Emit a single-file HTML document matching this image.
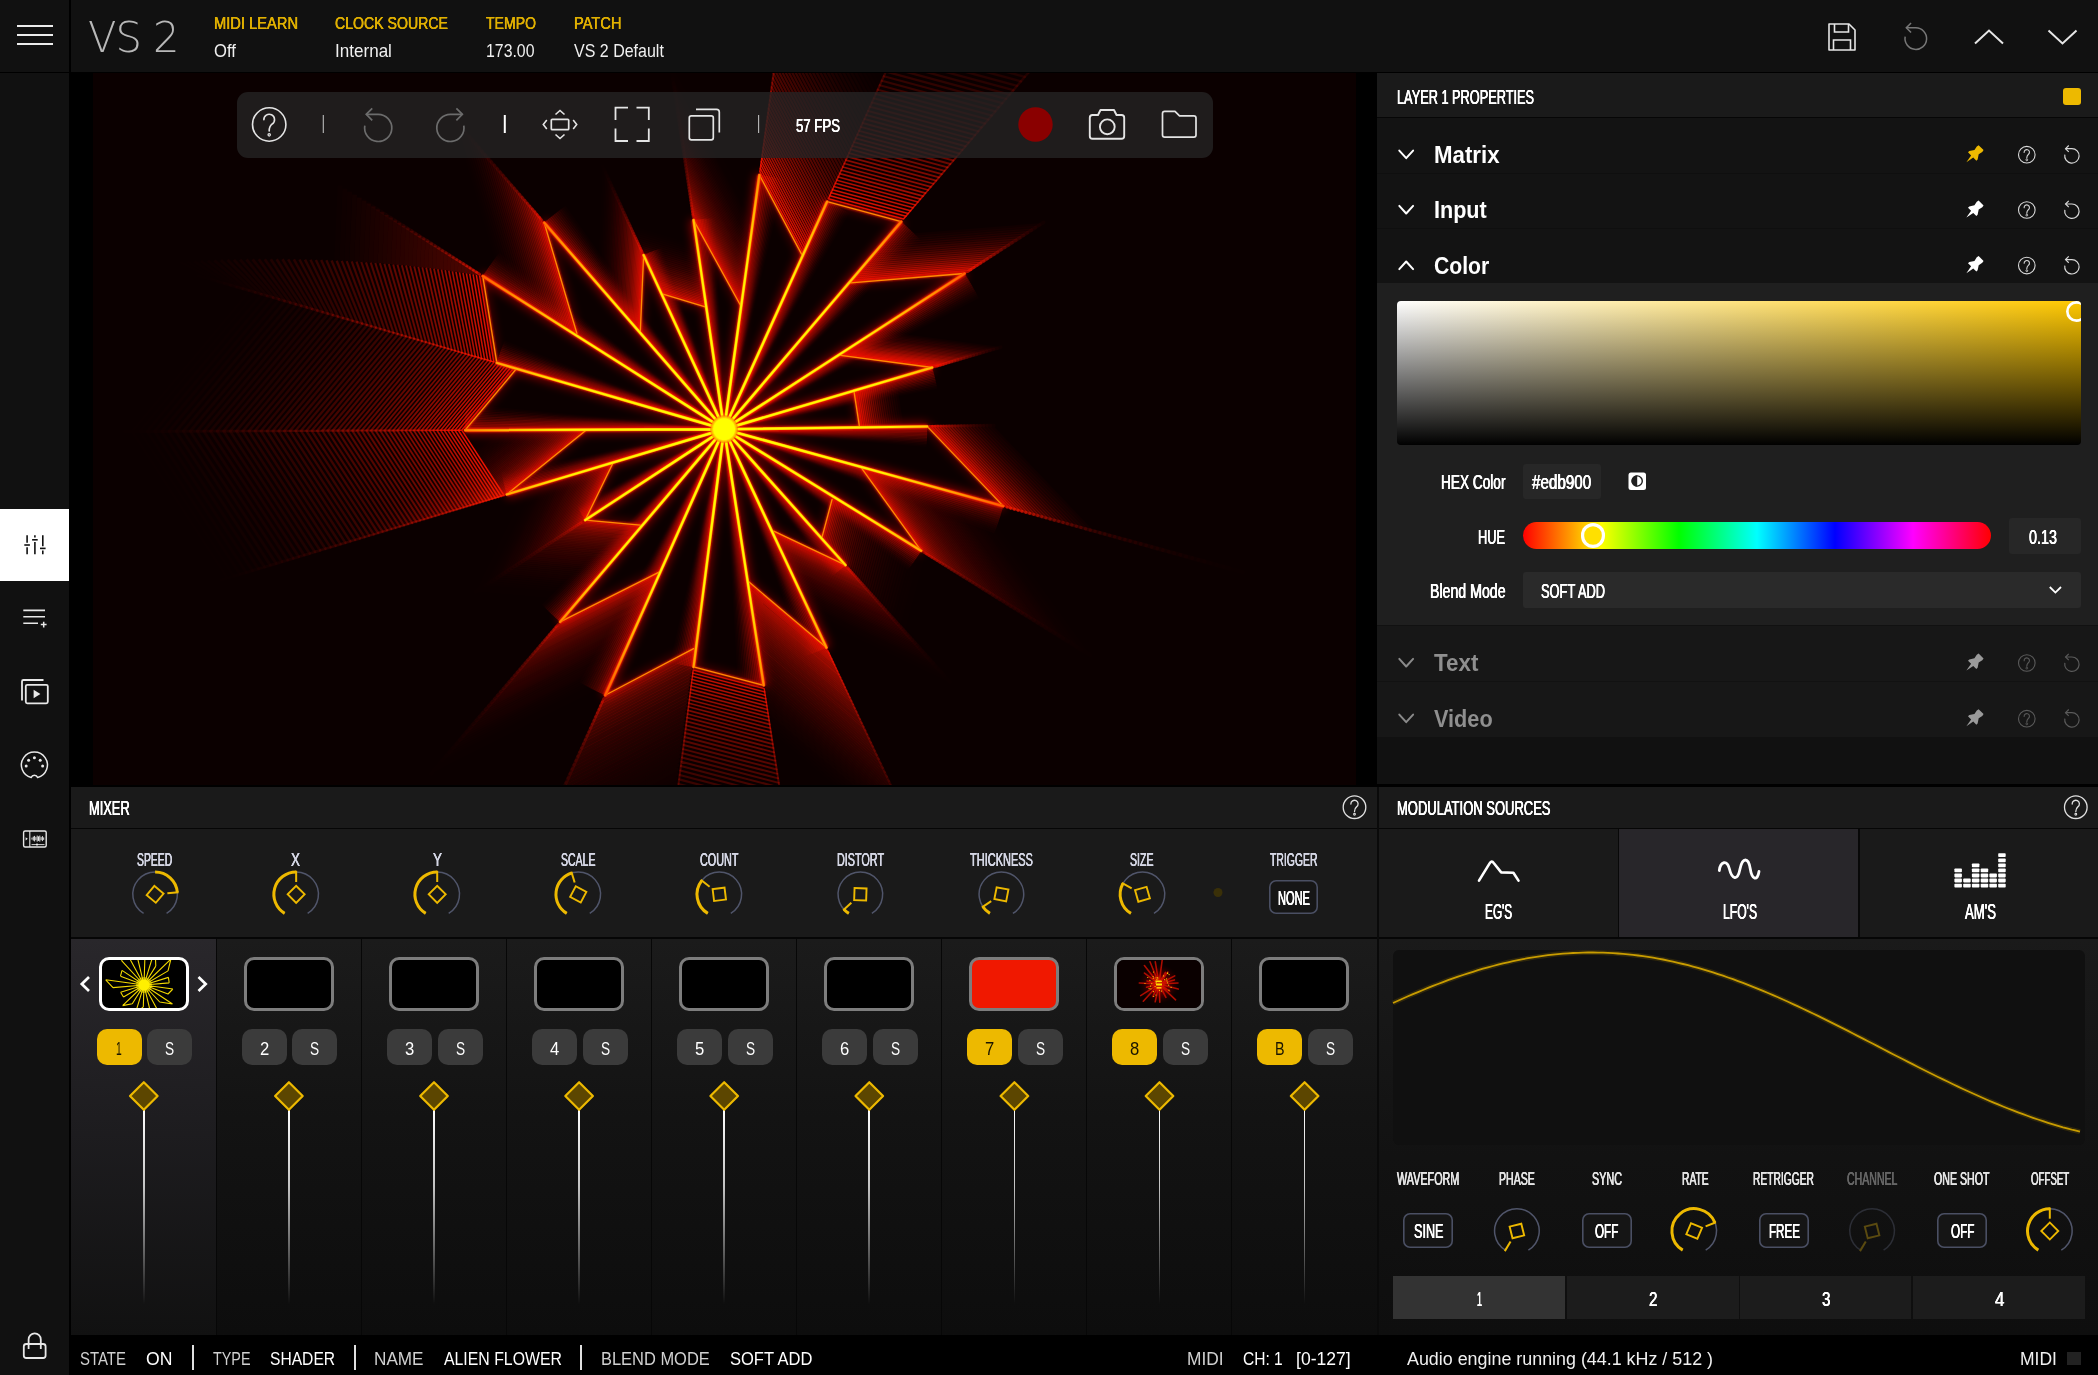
<!DOCTYPE html>
<html><head><meta charset="utf-8"><title>VS 2</title>
<style>
html,body{margin:0;padding:0;background:#111;}
body{width:2098px;height:1375px;overflow:hidden;position:relative;font-family:"Liberation Sans",sans-serif;}
#root{position:absolute;left:0;top:0;width:2098px;height:1375px;overflow:hidden;background:#111;}
.b{position:absolute;display:block;}
.t{position:absolute;display:block;white-space:nowrap;transform-origin:0 0;font-family:"Liberation Sans",sans-serif;}
svg{overflow:visible}
</style></head><body><div id="root">
<div class="b" style="left:0.0px;top:0.0px;width:2098.0px;height:72.0px;background:#111;"></div>
<div class="b" style="left:0.0px;top:71.5px;width:2098.0px;height:1.5px;background:#000;"></div>
<div class="b" style="left:69.0px;top:0.0px;width:2.0px;height:1375.0px;background:#000;"></div>
<div class="b" style="left:0.0px;top:73.0px;width:69.0px;height:1302.0px;background:#111;"></div>
<div class="b" style="left:17.0px;top:24.8px;width:36.0px;height:1.8px;background:#ececec;"></div>
<div class="b" style="left:17.0px;top:34.1px;width:36.0px;height:1.8px;background:#ececec;"></div>
<div class="b" style="left:17.0px;top:43.3px;width:36.0px;height:1.8px;background:#ececec;"></div>
<span class="t" style="left:88px;top:11px;font-size:42px;line-height:54px;color:#b8b8b8;font-family:'DejaVu Sans Light','DejaVu Sans',sans-serif;font-weight:200;transform:scaleX(0.99);letter-spacing:-1px">VS 2</span>
<span class="t" style="left:214.0px;top:14.4px;font-size:16.72px;line-height:19px;color:#e0b000;transform:scaleX(0.8791);text-shadow:0.22px 0 0 #e0b000,-0.22px 0 0 #e0b000;">MIDI LEARN</span>
<span class="t" style="left:214.0px;top:41.3px;font-size:17.73px;line-height:20px;color:#f0f0f0;transform:scaleX(0.9371);">Off</span>
<span class="t" style="left:335.0px;top:14.4px;font-size:16.72px;line-height:19px;color:#e0b000;transform:scaleX(0.8450);text-shadow:0.22px 0 0 #e0b000,-0.22px 0 0 #e0b000;">CLOCK SOURCE</span>
<span class="t" style="left:335.0px;top:41.3px;font-size:17.73px;line-height:20px;color:#f0f0f0;transform:scaleX(0.9630);">Internal</span>
<span class="t" style="left:486.0px;top:14.4px;font-size:16.72px;line-height:19px;color:#e0b000;transform:scaleX(0.8421);text-shadow:0.22px 0 0 #e0b000,-0.22px 0 0 #e0b000;">TEMPO</span>
<span class="t" style="left:486.0px;top:41.3px;font-size:17.73px;line-height:20px;color:#f0f0f0;transform:scaleX(0.8949);">173.00</span>
<span class="t" style="left:573.5px;top:14.4px;font-size:16.72px;line-height:19px;color:#e0b000;transform:scaleX(0.8774);text-shadow:0.22px 0 0 #e0b000,-0.22px 0 0 #e0b000;">PATCH</span>
<span class="t" style="left:573.5px;top:41.3px;font-size:17.73px;line-height:20px;color:#f0f0f0;transform:scaleX(0.9031);">VS 2 Default</span>
<svg class="b" style="left:1828.0px;top:23.0px;" width="28.0" height="28.0" viewBox="0 0 28.0 28.0"><path d="M1 1 H21 L27 7 V27 H1 Z" fill="none" stroke="#e6e6e6" stroke-width="1.6" stroke-linejoin="round"/><path d="M6.5 1 V9 H20.5 V1" fill="none" stroke="#e6e6e6" stroke-width="1.6"/><path d="M5.5 27 V17 H22.5 V27" fill="none" stroke="#e6e6e6" stroke-width="1.6"/></svg>
<svg class="b" style="left:0.0px;top:0.0px;" width="2098.0" height="72.0" viewBox="0 0 2098.0 72.0"><path d="M1906.30 27.80 H1915.80 A10.8 10.8 0 1 1 1905.16 36.72" fill="none" stroke="#777" stroke-width="1.5"/><path d="M1911.05 23.05 L1906.30 27.80 L1911.05 32.55" fill="none" stroke="#777" stroke-width="1.5"/></svg>
<svg class="b" style="left:0.0px;top:0.0px;" width="2098.0" height="72.0" viewBox="0 0 2098.0 72.0"><path d="M1975 43.5 L1989 30.5 L2003 43.5" fill="none" stroke="#e6e6e6" stroke-width="2"/><path d="M2048.5 30.5 L2062.5 43.5 L2076.5 30.5" fill="none" stroke="#e6e6e6" stroke-width="2"/></svg>
<div class="b" style="left:1377.0px;top:73.0px;width:721.0px;height:44.0px;background:#1a1a1a;"></div>
<div class="b" style="left:1377.0px;top:116.5px;width:721.0px;height:1.5px;background:#060606;"></div>
<span class="t" style="left:1397.0px;top:85.7px;font-size:20.35px;line-height:22px;color:#fff;transform:scaleX(0.6268);text-shadow:0.41px 0 0 #fff,-0.41px 0 0 #fff;">LAYER 1 PROPERTIES</span>
<div class="b" style="left:2062.5px;top:88.0px;width:18.5px;height:16.5px;background:#edb900;border-radius:3px;"></div>
<div class="b" style="left:1377.0px;top:118.2px;width:721.0px;height:54.5px;background:#131313;"></div>
<div class="b" style="left:1377.0px;top:172.7px;width:721.0px;height:1.0px;background:#0f0f0f;"></div>
<svg class="b" style="left:0.0px;top:0.0px;" width="2098.0" height="1375.0" viewBox="0 0 2098.0 1375.0"><path d="M1399.3 150.59999999999997 L1406.2 158.2 L1413.1000000000001 150.59999999999997" fill="none" stroke="#fff" stroke-width="2" stroke-linecap="round" stroke-linejoin="round"/><g transform="translate(1974.3,154.39999999999998) rotate(45)" fill="#edb900" stroke="none"><path d="M-3.5 -9.6 H3.5 L3.9 -7.4 L3.0 -3.2 L5.9 1.2 V3.0 H1.5 L0 11.2 L-1.5 3.0 H-5.9 V1.2 L-3.0 -3.2 L-3.9 -7.4 Z"/></g><circle cx="2026.8" cy="154.7" r="8.3" fill="none" stroke="#d8d8d8" stroke-width="1.1"/><path d="M2024.14 152.38 a2.66 2.66 0 1 1 4.15 2.08 q-1.49 1.16 -1.49 3.49" fill="none" stroke="#d8d8d8" stroke-width="1.1" stroke-linecap="round"/><circle cx="2026.8" cy="159.85" r="0.90" fill="none" stroke="#d8d8d8" stroke-width="0.88"/><path d="M2065.56 148.70 H2071.90 A7.2 7.2 0 1 1 2064.81 154.65" fill="none" stroke="#d8d8d8" stroke-width="1.2"/><path d="M2068.73 145.53 L2065.56 148.70 L2068.73 151.87" fill="none" stroke="#d8d8d8" stroke-width="1.2"/></svg>
<span class="t" style="left:1433.7px;top:141.7px;font-size:23.26px;line-height:26px;color:#fff;transform:scaleX(0.9574);font-weight:700;">Matrix</span>
<div class="b" style="left:1377.0px;top:173.5px;width:721.0px;height:54.5px;background:#131313;"></div>
<div class="b" style="left:1377.0px;top:228.0px;width:721.0px;height:1.0px;background:#0f0f0f;"></div>
<svg class="b" style="left:0.0px;top:0.0px;" width="2098.0" height="1375.0" viewBox="0 0 2098.0 1375.0"><path d="M1399.3 205.89999999999998 L1406.2 213.5 L1413.1000000000001 205.89999999999998" fill="none" stroke="#fff" stroke-width="2" stroke-linecap="round" stroke-linejoin="round"/><g transform="translate(1974.3,209.7) rotate(45)" fill="#fff" stroke="none"><path d="M-3.5 -9.6 H3.5 L3.9 -7.4 L3.0 -3.2 L5.9 1.2 V3.0 H1.5 L0 11.2 L-1.5 3.0 H-5.9 V1.2 L-3.0 -3.2 L-3.9 -7.4 Z"/></g><circle cx="2026.8" cy="210" r="8.3" fill="none" stroke="#d8d8d8" stroke-width="1.1"/><path d="M2024.14 207.68 a2.66 2.66 0 1 1 4.15 2.08 q-1.49 1.16 -1.49 3.49" fill="none" stroke="#d8d8d8" stroke-width="1.1" stroke-linecap="round"/><circle cx="2026.8" cy="215.15" r="0.90" fill="none" stroke="#d8d8d8" stroke-width="0.88"/><path d="M2065.56 204.00 H2071.90 A7.2 7.2 0 1 1 2064.81 209.95" fill="none" stroke="#d8d8d8" stroke-width="1.2"/><path d="M2068.73 200.83 L2065.56 204.00 L2068.73 207.17" fill="none" stroke="#d8d8d8" stroke-width="1.2"/></svg>
<span class="t" style="left:1433.7px;top:197.0px;font-size:23.26px;line-height:26px;color:#fff;transform:scaleX(0.9284);font-weight:700;">Input</span>
<div class="b" style="left:1377.0px;top:229.1px;width:721.0px;height:54.5px;background:#131313;"></div>
<div class="b" style="left:1377.0px;top:283.6px;width:721.0px;height:1.0px;background:#0f0f0f;"></div>
<svg class="b" style="left:0.0px;top:0.0px;" width="2098.0" height="1375.0" viewBox="0 0 2098.0 1375.0"><path d="M1399.3 269.1 L1406.2 261.5 L1413.1000000000001 269.1" fill="none" stroke="#fff" stroke-width="2" stroke-linecap="round" stroke-linejoin="round"/><g transform="translate(1974.3,265.3) rotate(45)" fill="#fff" stroke="none"><path d="M-3.5 -9.6 H3.5 L3.9 -7.4 L3.0 -3.2 L5.9 1.2 V3.0 H1.5 L0 11.2 L-1.5 3.0 H-5.9 V1.2 L-3.0 -3.2 L-3.9 -7.4 Z"/></g><circle cx="2026.8" cy="265.6" r="8.3" fill="none" stroke="#d8d8d8" stroke-width="1.1"/><path d="M2024.14 263.28 a2.66 2.66 0 1 1 4.15 2.08 q-1.49 1.16 -1.49 3.49" fill="none" stroke="#d8d8d8" stroke-width="1.1" stroke-linecap="round"/><circle cx="2026.8" cy="270.75" r="0.90" fill="none" stroke="#d8d8d8" stroke-width="0.88"/><path d="M2065.56 259.60 H2071.90 A7.2 7.2 0 1 1 2064.81 265.55" fill="none" stroke="#d8d8d8" stroke-width="1.2"/><path d="M2068.73 256.43 L2065.56 259.60 L2068.73 262.77" fill="none" stroke="#d8d8d8" stroke-width="1.2"/></svg>
<span class="t" style="left:1433.7px;top:252.6px;font-size:23.26px;line-height:26px;color:#fff;transform:scaleX(0.9101);font-weight:700;">Color</span>
<div class="b" style="left:1377.0px;top:283.0px;width:721.0px;height:342.0px;background:#1f1f1f;"></div>
<div class="b" style="left:1397px;top:301px;width:684px;height:143.5px;border-radius:4px;overflow:hidden;background:linear-gradient(to top,#000 0%,rgba(0,0,0,0) 100%),linear-gradient(to right,#fff 0%,#ffc800 100%);"><div class="b" style="left:668.5px;top:-0.5px;width:21.5px;height:21.5px;box-shadow:inset 0 0 0 2.7px #fff;border-radius:50%;"></div></div>
<span class="t" style="left:1440.5px;top:470.2px;font-size:21.08px;line-height:23px;color:#fff;transform:scaleX(0.6475);text-shadow:0.42px 0 0 #fff,-0.42px 0 0 #fff;">HEX Color</span>
<div class="b" style="left:1523.0px;top:464.0px;width:77.5px;height:35.0px;background:#272727;border-radius:3px;"></div>
<span class="t" style="left:1532.3px;top:470.2px;font-size:21.08px;line-height:23px;color:#fff;transform:scaleX(0.7216);text-shadow:0.42px 0 0 #fff,-0.42px 0 0 #fff;">#edb900</span>
<svg class="b" style="left:1628.0px;top:472.0px;" width="19.0" height="19.0" viewBox="0 0 19.0 19.0"><rect x="0.5" y="0.5" width="17.5" height="17.5" rx="2.5" fill="#fff"/><path d="M9.2 3.2 A5.8 5.8 0 0 0 9.2 14.8 Z" fill="#1f1f1f"/><circle cx="9.2" cy="9" r="5.1" fill="none" stroke="#1f1f1f" stroke-width="1.4"/></svg>
<span class="t" style="left:1478.0px;top:524.5px;font-size:21.08px;line-height:23px;color:#fff;transform:scaleX(0.6080);text-shadow:0.42px 0 0 #fff,-0.42px 0 0 #fff;">HUE</span>
<div class="b" style="left:1523px;top:522px;width:468px;height:26.5px;border-radius:14px;background:linear-gradient(to right,#f00 0%,#ff0 16.67%,#0f0 33.33%,#0ff 50%,#00f 66.67%,#f0f 83.33%,#f00 100%);"></div>
<div class="b" style="left:1580.9px;top:523.3px;width:24.6px;height:24.6px;box-shadow:inset 0 0 0 3.2px #fff;border-radius:50%;background:#ffe000;"></div>
<div class="b" style="left:2009.0px;top:518.0px;width:72.0px;height:36.0px;background:#272727;border-radius:3px;"></div>
<span class="t" style="left:2029.0px;top:524.5px;font-size:21.08px;line-height:23px;color:#fff;transform:scaleX(0.6805);text-shadow:0.42px 0 0 #fff,-0.42px 0 0 #fff;">0.13</span>
<span class="t" style="left:1429.5px;top:578.6px;font-size:21.08px;line-height:23px;color:#fff;transform:scaleX(0.6717);text-shadow:0.42px 0 0 #fff,-0.42px 0 0 #fff;">Blend Mode</span>
<div class="b" style="left:1523.0px;top:571.5px;width:558.0px;height:36.0px;background:#2a2a2a;border-radius:3px;"></div>
<span class="t" style="left:1541.0px;top:578.6px;font-size:21.08px;line-height:23px;color:#fff;transform:scaleX(0.6107);text-shadow:0.42px 0 0 #fff,-0.42px 0 0 #fff;">SOFT ADD</span>
<svg class="b" style="left:2049.0px;top:585.5px;" width="13.0" height="8.0" viewBox="0 0 13.0 8.0"><path d="M0.8 1 L6.4 6.6 L12 1" fill="none" stroke="#fff" stroke-width="1.8"/></svg>
<div class="b" style="left:1377.0px;top:626.0px;width:721.0px;height:55.5px;background:#171717;"></div>
<svg class="b" style="left:0.0px;top:0.0px;" width="2098.0" height="1375.0" viewBox="0 0 2098.0 1375.0"><path d="M1399.3 658.9000000000001 L1406.2 666.5 L1413.1000000000001 658.9000000000001" fill="none" stroke="#8a8a8a" stroke-width="2" stroke-linecap="round" stroke-linejoin="round"/><g transform="translate(1974.3,662.7) rotate(45)" fill="#9a9a9a" stroke="none"><path d="M-3.5 -9.6 H3.5 L3.9 -7.4 L3.0 -3.2 L5.9 1.2 V3.0 H1.5 L0 11.2 L-1.5 3.0 H-5.9 V1.2 L-3.0 -3.2 L-3.9 -7.4 Z"/></g><circle cx="2026.8" cy="663" r="8.3" fill="none" stroke="#5a5a5a" stroke-width="1.1"/><path d="M2024.14 660.68 a2.66 2.66 0 1 1 4.15 2.08 q-1.49 1.16 -1.49 3.49" fill="none" stroke="#5a5a5a" stroke-width="1.1" stroke-linecap="round"/><circle cx="2026.8" cy="668.15" r="0.90" fill="none" stroke="#5a5a5a" stroke-width="0.88"/><path d="M2065.56 657.00 H2071.90 A7.2 7.2 0 1 1 2064.81 662.95" fill="none" stroke="#5a5a5a" stroke-width="1.2"/><path d="M2068.73 653.83 L2065.56 657.00 L2068.73 660.17" fill="none" stroke="#5a5a5a" stroke-width="1.2"/></svg>
<span class="t" style="left:1433.7px;top:650.0px;font-size:23.26px;line-height:26px;color:#8f8f8f;transform:scaleX(0.9628);font-weight:700;">Text</span>
<div class="b" style="left:1377.0px;top:681.7px;width:721.0px;height:55.5px;background:#171717;"></div>
<svg class="b" style="left:0.0px;top:0.0px;" width="2098.0" height="1375.0" viewBox="0 0 2098.0 1375.0"><path d="M1399.3 714.6000000000001 L1406.2 722.2 L1413.1000000000001 714.6000000000001" fill="none" stroke="#8a8a8a" stroke-width="2" stroke-linecap="round" stroke-linejoin="round"/><g transform="translate(1974.3,718.4000000000001) rotate(45)" fill="#9a9a9a" stroke="none"><path d="M-3.5 -9.6 H3.5 L3.9 -7.4 L3.0 -3.2 L5.9 1.2 V3.0 H1.5 L0 11.2 L-1.5 3.0 H-5.9 V1.2 L-3.0 -3.2 L-3.9 -7.4 Z"/></g><circle cx="2026.8" cy="718.7" r="8.3" fill="none" stroke="#5a5a5a" stroke-width="1.1"/><path d="M2024.14 716.38 a2.66 2.66 0 1 1 4.15 2.08 q-1.49 1.16 -1.49 3.49" fill="none" stroke="#5a5a5a" stroke-width="1.1" stroke-linecap="round"/><circle cx="2026.8" cy="723.85" r="0.90" fill="none" stroke="#5a5a5a" stroke-width="0.88"/><path d="M2065.56 712.70 H2071.90 A7.2 7.2 0 1 1 2064.81 718.65" fill="none" stroke="#5a5a5a" stroke-width="1.2"/><path d="M2068.73 709.53 L2065.56 712.70 L2068.73 715.87" fill="none" stroke="#5a5a5a" stroke-width="1.2"/></svg>
<span class="t" style="left:1433.7px;top:705.7px;font-size:23.26px;line-height:26px;color:#8f8f8f;transform:scaleX(0.9331);font-weight:700;">Video</span>
<div class="b" style="left:1377.0px;top:737.0px;width:721.0px;height:48.0px;background:#111;"></div>
<div class="b" style="left:1377.0px;top:681.0px;width:721.0px;height:1.0px;background:#121212;"></div>
<div class="b" style="left:70.0px;top:784.0px;width:2028.0px;height:2.5px;background:#000;"></div>
<div class="b" style="left:1377.0px;top:786.5px;width:721.0px;height:41.5px;background:#1a1a1a;"></div>
<span class="t" style="left:1397.0px;top:796.7px;font-size:20.35px;line-height:22px;color:#fff;transform:scaleX(0.6385);text-shadow:0.41px 0 0 #fff,-0.41px 0 0 #fff;">MODULATION SOURCES</span>
<svg class="b" style="left:0.0px;top:0.0px;" width="2098.0" height="1375.0" viewBox="0 0 2098.0 1375.0"><circle cx="2075.8" cy="807.2" r="11.3" fill="none" stroke="#e0e0e0" stroke-width="1.3"/><path d="M2072.18 804.04 a3.62 3.62 0 1 1 5.65 2.83 q-2.03 1.58 -2.03 4.75" fill="none" stroke="#e0e0e0" stroke-width="1.3" stroke-linecap="round"/><circle cx="2075.8" cy="814.21" r="0.90" fill="none" stroke="#e0e0e0" stroke-width="1.04"/></svg>
<div class="b" style="left:1377.0px;top:827.5px;width:721.0px;height:1.5px;background:#060606;"></div>
<div class="b" style="left:1377.0px;top:829.0px;width:241.0px;height:107.5px;background:#1a1a1a;"></div>
<div class="b" style="left:1619.0px;top:829.0px;width:239.0px;height:107.5px;background:#28262a;"></div>
<div class="b" style="left:1859.5px;top:829.0px;width:238.5px;height:107.5px;background:#1a1a1a;"></div>
<div class="b" style="left:1617.7px;top:829.0px;width:1.5px;height:107.5px;background:#080808;"></div>
<div class="b" style="left:1858.0px;top:829.0px;width:1.6px;height:107.5px;background:#080808;"></div>
<div class="b" style="left:1377.0px;top:936.5px;width:721.0px;height:2.0px;background:#060606;"></div>
<span class="t" style="left:1485.2px;top:900.1px;font-size:21.37px;line-height:24px;color:#fff;transform:scaleX(0.5541);text-shadow:0.43px 0 0 #fff,-0.43px 0 0 #fff;">EG'S</span>
<span class="t" style="left:1722.5px;top:900.1px;font-size:21.37px;line-height:24px;color:#fff;transform:scaleX(0.5683);text-shadow:0.43px 0 0 #fff,-0.43px 0 0 #fff;">LFO'S</span>
<span class="t" style="left:1964.5px;top:900.1px;font-size:21.37px;line-height:24px;color:#fff;transform:scaleX(0.6166);text-shadow:0.43px 0 0 #fff,-0.43px 0 0 #fff;">AM'S</span>
<svg class="b" style="left:0.0px;top:0.0px;" width="2098.0" height="1375.0" viewBox="0 0 2098.0 1375.0"><path d="M1479 880.6 L1489.6 863.4 Q1491.6 860 1493.9 863.2 L1501.2 872.4 L1513.4 872.8 L1518.5 880.6" fill="none" stroke="#fff" stroke-width="2.6" stroke-linecap="round" stroke-linejoin="round"/></svg>
<svg class="b" style="left:0.0px;top:0.0px;" width="2098.0" height="1375.0" viewBox="0 0 2098.0 1375.0"><path d="M1719.3 870.5 C1720.5 861 1727 860 1729.3 868.5 C1732 879.5 1737.5 881.5 1740 869 C1742.5 857 1748.5 857 1750.3 869 C1752 880 1757.5 881.5 1759 871.5" fill="none" stroke="#fff" stroke-width="2.8" stroke-linecap="round"/></svg>
<svg class="b" style="left:0.0px;top:0.0px;" width="2098.0" height="1375.0" viewBox="0 0 2098.0 1375.0"><rect x="1954.4" y="883.7" width="7.5" height="3.8" rx="0.8" fill="#fff"/><rect x="1954.4" y="878.6" width="7.5" height="3.8" rx="0.8" fill="#fff"/><rect x="1954.4" y="873.6" width="7.5" height="3.8" rx="0.8" fill="#fff"/><rect x="1954.4" y="868.5" width="7.5" height="3.8" rx="0.8" fill="#fff"/><rect x="1963.2" y="883.7" width="7.5" height="3.8" rx="0.8" fill="#fff"/><rect x="1963.2" y="878.6" width="7.5" height="3.8" rx="0.8" fill="#fff"/><rect x="1971.9" y="883.7" width="7.5" height="3.8" rx="0.8" fill="#fff"/><rect x="1971.9" y="878.6" width="7.5" height="3.8" rx="0.8" fill="#fff"/><rect x="1971.9" y="873.6" width="7.5" height="3.8" rx="0.8" fill="#fff"/><rect x="1971.9" y="868.5" width="7.5" height="3.8" rx="0.8" fill="#fff"/><rect x="1971.9" y="863.4" width="7.5" height="3.8" rx="0.8" fill="#fff"/><rect x="1980.7" y="883.7" width="7.5" height="3.8" rx="0.8" fill="#fff"/><rect x="1980.7" y="878.6" width="7.5" height="3.8" rx="0.8" fill="#fff"/><rect x="1980.7" y="873.6" width="7.5" height="3.8" rx="0.8" fill="#fff"/><rect x="1980.7" y="868.5" width="7.5" height="3.8" rx="0.8" fill="#fff"/><rect x="1989.4" y="883.7" width="7.5" height="3.8" rx="0.8" fill="#fff"/><rect x="1989.4" y="878.6" width="7.5" height="3.8" rx="0.8" fill="#fff"/><rect x="1989.4" y="873.6" width="7.5" height="3.8" rx="0.8" fill="#fff"/><rect x="1998.2" y="883.7" width="7.5" height="3.8" rx="0.8" fill="#fff"/><rect x="1998.2" y="878.6" width="7.5" height="3.8" rx="0.8" fill="#fff"/><rect x="1998.2" y="873.6" width="7.5" height="3.8" rx="0.8" fill="#fff"/><rect x="1998.2" y="868.5" width="7.5" height="3.8" rx="0.8" fill="#fff"/><rect x="1998.2" y="863.4" width="7.5" height="3.8" rx="0.8" fill="#fff"/><rect x="1998.2" y="858.4" width="7.5" height="3.8" rx="0.8" fill="#fff"/><rect x="1998.2" y="853.3" width="7.5" height="3.8" rx="0.8" fill="#fff"/></svg>
<div class="b" style="left:1377px;top:938.5px;width:721px;height:396px;background:linear-gradient(to bottom,#1a1a1a 0%,#121212 55%,#0e0e0e 100%);"></div>
<div class="b" style="left:1392.5px;top:950.0px;width:692.5px;height:195.0px;background:#101010;border-radius:6px;"></div>
<svg class="b" style="left:0.0px;top:0.0px;" width="2098.0" height="1375.0" viewBox="0 0 2098.0 1375.0"><polyline points="1393.0,1003.0 1398.0,1000.8 1403.0,998.5 1408.0,996.3 1413.0,994.2 1418.0,992.1 1423.0,990.0 1428.0,987.9 1433.0,985.9 1438.0,984.0 1443.0,982.1 1448.0,980.2 1453.0,978.4 1458.0,976.7 1463.0,975.0 1468.0,973.3 1473.0,971.8 1478.0,970.2 1483.0,968.7 1488.0,967.3 1493.0,966.0 1498.0,964.7 1503.0,963.4 1508.0,962.3 1513.0,961.1 1518.0,960.1 1523.0,959.1 1528.0,958.2 1533.0,957.4 1538.0,956.6 1543.0,955.9 1548.0,955.2 1553.0,954.6 1558.0,954.1 1563.0,953.7 1568.0,953.3 1573.0,953.0 1578.0,952.8 1583.0,952.6 1588.0,952.5 1593.0,952.5 1598.0,952.6 1603.0,952.7 1608.0,952.9 1613.0,953.1 1618.0,953.5 1623.0,953.9 1628.0,954.3 1633.0,954.9 1638.0,955.5 1643.0,956.2 1648.0,956.9 1653.0,957.7 1658.0,958.6 1663.0,959.5 1668.0,960.6 1673.0,961.6 1678.0,962.8 1683.0,964.0 1688.0,965.2 1693.0,966.6 1698.0,967.9 1703.0,969.4 1708.0,970.9 1713.0,972.4 1718.0,974.1 1723.0,975.7 1728.0,977.5 1733.0,979.2 1738.0,981.1 1743.0,982.9 1748.0,984.9 1753.0,986.8 1758.0,988.8 1763.0,990.9 1768.0,993.0 1773.0,995.1 1778.0,997.3 1783.0,999.5 1788.0,1001.8 1793.0,1004.1 1798.0,1006.4 1803.0,1008.7 1808.0,1011.1 1813.0,1013.5 1818.0,1015.9 1823.0,1018.4 1828.0,1020.9 1833.0,1023.4 1838.0,1025.9 1843.0,1028.4 1848.0,1030.9 1853.0,1033.5 1858.0,1036.1 1863.0,1038.6 1868.0,1041.2 1873.0,1043.8 1878.0,1046.4 1883.0,1049.0 1888.0,1051.6 1893.0,1054.2 1898.0,1056.7 1903.0,1059.3 1908.0,1061.9 1913.0,1064.4 1918.0,1067.0 1923.0,1069.5 1928.0,1072.0 1933.0,1074.5 1938.0,1077.0 1943.0,1079.4 1948.0,1081.8 1953.0,1084.2 1958.0,1086.6 1963.0,1089.0 1968.0,1091.3 1973.0,1093.5 1978.0,1095.8 1983.0,1098.0 1988.0,1100.2 1993.0,1102.3 1998.0,1104.4 2003.0,1106.5 2008.0,1108.5 2013.0,1110.4 2018.0,1112.3 2023.0,1114.2 2028.0,1116.0 2033.0,1117.8 2038.0,1119.5 2043.0,1121.2 2048.0,1122.8 2053.0,1124.3 2058.0,1125.8 2063.0,1127.3 2068.0,1128.6 2073.0,1130.0 2078.0,1131.2 2080.0,1131.7" fill="none" stroke="#8a6c00" stroke-width="5" stroke-opacity="0.25"/><polyline points="1393.0,1003.0 1398.0,1000.8 1403.0,998.5 1408.0,996.3 1413.0,994.2 1418.0,992.1 1423.0,990.0 1428.0,987.9 1433.0,985.9 1438.0,984.0 1443.0,982.1 1448.0,980.2 1453.0,978.4 1458.0,976.7 1463.0,975.0 1468.0,973.3 1473.0,971.8 1478.0,970.2 1483.0,968.7 1488.0,967.3 1493.0,966.0 1498.0,964.7 1503.0,963.4 1508.0,962.3 1513.0,961.1 1518.0,960.1 1523.0,959.1 1528.0,958.2 1533.0,957.4 1538.0,956.6 1543.0,955.9 1548.0,955.2 1553.0,954.6 1558.0,954.1 1563.0,953.7 1568.0,953.3 1573.0,953.0 1578.0,952.8 1583.0,952.6 1588.0,952.5 1593.0,952.5 1598.0,952.6 1603.0,952.7 1608.0,952.9 1613.0,953.1 1618.0,953.5 1623.0,953.9 1628.0,954.3 1633.0,954.9 1638.0,955.5 1643.0,956.2 1648.0,956.9 1653.0,957.7 1658.0,958.6 1663.0,959.5 1668.0,960.6 1673.0,961.6 1678.0,962.8 1683.0,964.0 1688.0,965.2 1693.0,966.6 1698.0,967.9 1703.0,969.4 1708.0,970.9 1713.0,972.4 1718.0,974.1 1723.0,975.7 1728.0,977.5 1733.0,979.2 1738.0,981.1 1743.0,982.9 1748.0,984.9 1753.0,986.8 1758.0,988.8 1763.0,990.9 1768.0,993.0 1773.0,995.1 1778.0,997.3 1783.0,999.5 1788.0,1001.8 1793.0,1004.1 1798.0,1006.4 1803.0,1008.7 1808.0,1011.1 1813.0,1013.5 1818.0,1015.9 1823.0,1018.4 1828.0,1020.9 1833.0,1023.4 1838.0,1025.9 1843.0,1028.4 1848.0,1030.9 1853.0,1033.5 1858.0,1036.1 1863.0,1038.6 1868.0,1041.2 1873.0,1043.8 1878.0,1046.4 1883.0,1049.0 1888.0,1051.6 1893.0,1054.2 1898.0,1056.7 1903.0,1059.3 1908.0,1061.9 1913.0,1064.4 1918.0,1067.0 1923.0,1069.5 1928.0,1072.0 1933.0,1074.5 1938.0,1077.0 1943.0,1079.4 1948.0,1081.8 1953.0,1084.2 1958.0,1086.6 1963.0,1089.0 1968.0,1091.3 1973.0,1093.5 1978.0,1095.8 1983.0,1098.0 1988.0,1100.2 1993.0,1102.3 1998.0,1104.4 2003.0,1106.5 2008.0,1108.5 2013.0,1110.4 2018.0,1112.3 2023.0,1114.2 2028.0,1116.0 2033.0,1117.8 2038.0,1119.5 2043.0,1121.2 2048.0,1122.8 2053.0,1124.3 2058.0,1125.8 2063.0,1127.3 2068.0,1128.6 2073.0,1130.0 2078.0,1131.2 2080.0,1131.7" fill="none" stroke="#c89c00" stroke-width="1.8"/></svg>
<span class="t" style="left:1397.0px;top:1168.3px;font-size:18.46px;line-height:21px;color:#e4e4e4;transform:scaleX(0.5854);text-shadow:0.37px 0 0 #e4e4e4,-0.37px 0 0 #e4e4e4;">WAVEFORM</span>
<span class="t" style="left:1498.8px;top:1168.3px;font-size:18.46px;line-height:21px;color:#e4e4e4;transform:scaleX(0.5734);text-shadow:0.37px 0 0 #e4e4e4,-0.37px 0 0 #e4e4e4;">PHASE</span>
<span class="t" style="left:1591.5px;top:1168.3px;font-size:18.46px;line-height:21px;color:#e4e4e4;transform:scaleX(0.5858);text-shadow:0.37px 0 0 #e4e4e4,-0.37px 0 0 #e4e4e4;">SYNC</span>
<span class="t" style="left:1681.8px;top:1168.3px;font-size:18.46px;line-height:21px;color:#e4e4e4;transform:scaleX(0.5575);text-shadow:0.37px 0 0 #e4e4e4,-0.37px 0 0 #e4e4e4;">RATE</span>
<span class="t" style="left:1753.0px;top:1168.3px;font-size:18.46px;line-height:21px;color:#e4e4e4;transform:scaleX(0.5558);text-shadow:0.37px 0 0 #e4e4e4,-0.37px 0 0 #e4e4e4;">RETRIGGER</span>
<span class="t" style="left:1847.0px;top:1168.3px;font-size:18.46px;line-height:21px;color:#666;transform:scaleX(0.5719);text-shadow:0.37px 0 0 #666,-0.37px 0 0 #666;">CHANNEL</span>
<span class="t" style="left:1934.4px;top:1168.3px;font-size:18.46px;line-height:21px;color:#e4e4e4;transform:scaleX(0.5754);text-shadow:0.37px 0 0 #e4e4e4,-0.37px 0 0 #e4e4e4;">ONE SHOT</span>
<span class="t" style="left:2031.3px;top:1168.3px;font-size:18.46px;line-height:21px;color:#e4e4e4;transform:scaleX(0.5258);text-shadow:0.37px 0 0 #e4e4e4,-0.37px 0 0 #e4e4e4;">OFFSET</span>
<div class="b" style="left:1403.3px;top:1213px;width:49.700000000000045px;height:34.5px;box-shadow:inset 0 0 0 1.6px #4a4f63;border-radius:7px;background:#151515;"></div>
<span class="t" style="left:1413.5px;top:1218.8px;font-size:21.08px;line-height:23px;color:#fff;transform:scaleX(0.5999);text-shadow:0.42px 0 0 #fff,-0.42px 0 0 #fff;">SINE</span>
<div class="b" style="left:1582px;top:1213px;width:49.5px;height:34.5px;box-shadow:inset 0 0 0 1.6px #4a4f63;border-radius:7px;background:#151515;"></div>
<span class="t" style="left:1595.2px;top:1218.8px;font-size:21.08px;line-height:23px;color:#fff;transform:scaleX(0.5528);text-shadow:0.42px 0 0 #fff,-0.42px 0 0 #fff;">OFF</span>
<div class="b" style="left:1759px;top:1213px;width:49.5px;height:34.5px;box-shadow:inset 0 0 0 1.6px #4a4f63;border-radius:7px;background:#151515;"></div>
<span class="t" style="left:1769.0px;top:1218.8px;font-size:21.08px;line-height:23px;color:#fff;transform:scaleX(0.5516);text-shadow:0.42px 0 0 #fff,-0.42px 0 0 #fff;">FREE</span>
<div class="b" style="left:1937.2px;top:1213px;width:49.59999999999991px;height:34.5px;box-shadow:inset 0 0 0 1.6px #4a4f63;border-radius:7px;background:#151515;"></div>
<span class="t" style="left:1950.5px;top:1218.8px;font-size:21.08px;line-height:23px;color:#fff;transform:scaleX(0.5575);text-shadow:0.42px 0 0 #fff,-0.42px 0 0 #fff;">OFF</span>
<svg class="b" style="left:0.0px;top:0.0px;" width="2098.0" height="1375.0" viewBox="0 0 2098.0 1375.0"><path d="M1505.41 1250.11 A22.3 22.3 0 1 1 1528.39 1250.11" fill="none" stroke="#50556a" stroke-width="1.5"/><path d="M1504.80 1251.14 L1510.57 1241.54" stroke="#edb900" stroke-width="2" fill="none"/><rect x="-6.0" y="-6.0" width="12" height="12" fill="none" stroke="#edb900" stroke-width="1.9" transform="translate(1516.9,1231) rotate(-104)"/><path d="M1682.71 1250.11 A22.3 22.3 0 1 1 1705.69 1250.11" fill="none" stroke="#50556a" stroke-width="1.5"/><path d="M1682.71 1250.11 A22.3 22.3 0 1 1 1714.88 1222.65" fill="none" stroke="#edb900" stroke-width="3"/><path d="M1715.99 1222.20 L1705.60 1226.39" stroke="#edb900" stroke-width="2" fill="none"/><rect x="-6.0" y="-6.0" width="12" height="12" fill="none" stroke="#edb900" stroke-width="1.9" transform="translate(1694.2,1231) rotate(113)"/><path d="M1860.61 1250.11 A22.3 22.3 0 1 1 1883.59 1250.11" fill="none" stroke="#2c2e36" stroke-width="1.5"/><path d="M1860.00 1251.14 L1865.77 1241.54" stroke="#5a4a10" stroke-width="2" fill="none"/><rect x="-6.0" y="-6.0" width="12" height="12" fill="none" stroke="#5a4a10" stroke-width="1.9" transform="translate(1872.1,1231) rotate(-104)"/><path d="M2038.31 1250.11 A22.3 22.3 0 1 1 2061.29 1250.11" fill="none" stroke="#50556a" stroke-width="1.5"/><path d="M2038.31 1250.11 A22.3 22.3 0 0 1 2049.80 1208.70" fill="none" stroke="#edb900" stroke-width="3"/><path d="M2049.80 1207.50 L2049.80 1218.70" stroke="#edb900" stroke-width="2" fill="none"/><rect x="-6.0" y="-6.0" width="12" height="12" fill="none" stroke="#edb900" stroke-width="1.9" transform="translate(2049.8,1231) rotate(45)"/></svg>
<div class="b" style="left:1392.7px;top:1275.5px;width:172.3px;height:43.8px;background:#333;"></div>
<div class="b" style="left:1566.5px;top:1275.5px;width:172.2px;height:43.8px;background:#1c1c1c;"></div>
<div class="b" style="left:1740.4px;top:1275.5px;width:171.1px;height:43.8px;background:#1c1c1c;"></div>
<div class="b" style="left:1913.2px;top:1275.5px;width:171.8px;height:43.8px;background:#1c1c1c;"></div>
<span class="t" style="left:1477.0px;top:1286.8px;font-size:21.08px;line-height:23px;color:#fff;transform:scaleX(0.4240);text-shadow:0.42px 0 0 #fff,-0.42px 0 0 #fff;">1</span>
<span class="t" style="left:1648.5px;top:1286.8px;font-size:21.08px;line-height:23px;color:#fff;transform:scaleX(0.7208);text-shadow:0.42px 0 0 #fff,-0.42px 0 0 #fff;">2</span>
<span class="t" style="left:1821.5px;top:1286.8px;font-size:21.08px;line-height:23px;color:#fff;transform:scaleX(0.7208);text-shadow:0.42px 0 0 #fff,-0.42px 0 0 #fff;">3</span>
<span class="t" style="left:1994.5px;top:1286.8px;font-size:21.08px;line-height:23px;color:#fff;transform:scaleX(0.8056);text-shadow:0.42px 0 0 #fff,-0.42px 0 0 #fff;">4</span>
<div class="b" style="left:70.0px;top:1334.5px;width:2028.0px;height:40.5px;background:#000;"></div>
<span class="t" style="left:80.0px;top:1348.3px;font-size:19.19px;line-height:21px;color:#d0d0d0;transform:scaleX(0.7790);">STATE</span>
<span class="t" style="left:146.0px;top:1348.3px;font-size:19.19px;line-height:21px;color:#fff;transform:scaleX(0.9168);">ON</span>
<span class="t" style="left:212.5px;top:1348.3px;font-size:19.19px;line-height:21px;color:#d0d0d0;transform:scaleX(0.7488);">TYPE</span>
<span class="t" style="left:269.6px;top:1348.3px;font-size:19.19px;line-height:21px;color:#fff;transform:scaleX(0.8139);">SHADER</span>
<span class="t" style="left:374.4px;top:1348.3px;font-size:19.19px;line-height:21px;color:#d0d0d0;transform:scaleX(0.8931);">NAME</span>
<span class="t" style="left:443.8px;top:1348.3px;font-size:19.19px;line-height:21px;color:#fff;transform:scaleX(0.8251);">ALIEN FLOWER</span>
<span class="t" style="left:601.3px;top:1348.3px;font-size:19.19px;line-height:21px;color:#d0d0d0;transform:scaleX(0.8571);">BLEND MODE</span>
<span class="t" style="left:730.0px;top:1348.3px;font-size:19.19px;line-height:21px;color:#fff;transform:scaleX(0.8612);">SOFT ADD</span>
<span class="t" style="left:1186.5px;top:1348.3px;font-size:19.19px;line-height:21px;color:#d0d0d0;transform:scaleX(0.9036);">MIDI</span>
<span class="t" style="left:1243.2px;top:1348.3px;font-size:19.19px;line-height:21px;color:#fff;transform:scaleX(0.8108);">CH: 1</span>
<span class="t" style="left:1296.0px;top:1348.3px;font-size:19.19px;line-height:21px;color:#fff;transform:scaleX(0.9147);">[0-127]</span>
<div class="b" style="left:192.1px;top:1344.5px;width:1.8px;height:25.0px;background:#e0e0e0;"></div>
<div class="b" style="left:353.8px;top:1344.5px;width:1.8px;height:25.0px;background:#e0e0e0;"></div>
<div class="b" style="left:580.3px;top:1344.5px;width:1.8px;height:25.0px;background:#e0e0e0;"></div>
<span class="t" style="left:1406.7px;top:1348.3px;font-size:19.19px;line-height:21px;color:#f0f0f0;transform:scaleX(0.9315);">Audio engine running (44.1 kHz / 512 )</span>
<span class="t" style="left:2020.0px;top:1348.3px;font-size:19.19px;line-height:21px;color:#f0f0f0;transform:scaleX(0.9110);">MIDI</span>
<div class="b" style="left:2067.0px;top:1351.7px;width:14.0px;height:13.7px;background:#222;"></div>
<div class="b" style="left:71.0px;top:786.5px;width:1306.0px;height:41.5px;background:#1a1a1a;"></div>
<div class="b" style="left:1377.0px;top:786.5px;width:1.6px;height:548.5px;background:#0a0a0a;"></div>
<span class="t" style="left:89.4px;top:796.7px;font-size:20.35px;line-height:22px;color:#fff;transform:scaleX(0.6319);text-shadow:0.41px 0 0 #fff,-0.41px 0 0 #fff;">MIXER</span>
<svg class="b" style="left:0.0px;top:0.0px;" width="2098.0" height="1375.0" viewBox="0 0 2098.0 1375.0"><circle cx="1354.5" cy="807.2" r="11.3" fill="none" stroke="#e0e0e0" stroke-width="1.3"/><path d="M1350.88 804.04 a3.62 3.62 0 1 1 5.65 2.83 q-2.03 1.58 -2.03 4.75" fill="none" stroke="#e0e0e0" stroke-width="1.3" stroke-linecap="round"/><circle cx="1354.5" cy="814.21" r="0.90" fill="none" stroke="#e0e0e0" stroke-width="1.04"/></svg>
<div class="b" style="left:71.0px;top:827.5px;width:1306.0px;height:1.5px;background:#060606;"></div>
<div class="b" style="left:71.0px;top:829.0px;width:1306.0px;height:107.5px;background:#1a1a1a;"></div>
<div class="b" style="left:71.0px;top:936.5px;width:1306.0px;height:2.0px;background:#060606;"></div>
<span class="t" style="left:136.8px;top:849.5px;font-size:17.88px;line-height:20px;color:#d4d6e4;transform:scaleX(0.5810);text-shadow:0.36px 0 0 #d4d6e4,-0.36px 0 0 #d4d6e4;">SPEED</span>
<span class="t" style="left:291.0px;top:849.5px;font-size:17.88px;line-height:20px;color:#d4d6e4;transform:scaleX(0.7551);text-shadow:0.36px 0 0 #d4d6e4,-0.36px 0 0 #d4d6e4;">X</span>
<span class="t" style="left:432.5px;top:849.5px;font-size:17.88px;line-height:20px;color:#d4d6e4;transform:scaleX(0.7551);text-shadow:0.36px 0 0 #d4d6e4,-0.36px 0 0 #d4d6e4;">Y</span>
<span class="t" style="left:560.5px;top:849.5px;font-size:17.88px;line-height:20px;color:#d4d6e4;transform:scaleX(0.5887);text-shadow:0.36px 0 0 #d4d6e4,-0.36px 0 0 #d4d6e4;">SCALE</span>
<span class="t" style="left:699.5px;top:849.5px;font-size:17.88px;line-height:20px;color:#d4d6e4;transform:scaleX(0.6057);text-shadow:0.36px 0 0 #d4d6e4,-0.36px 0 0 #d4d6e4;">COUNT</span>
<span class="t" style="left:836.5px;top:849.5px;font-size:17.88px;line-height:20px;color:#d4d6e4;transform:scaleX(0.6047);text-shadow:0.36px 0 0 #d4d6e4,-0.36px 0 0 #d4d6e4;">DISTORT</span>
<span class="t" style="left:969.5px;top:849.5px;font-size:17.88px;line-height:20px;color:#d4d6e4;transform:scaleX(0.6158);text-shadow:0.36px 0 0 #d4d6e4,-0.36px 0 0 #d4d6e4;">THICKNESS</span>
<span class="t" style="left:1130.0px;top:849.5px;font-size:17.88px;line-height:20px;color:#d4d6e4;transform:scaleX(0.5915);text-shadow:0.36px 0 0 #d4d6e4,-0.36px 0 0 #d4d6e4;">SIZE</span>
<span class="t" style="left:1269.5px;top:849.5px;font-size:17.88px;line-height:20px;color:#d4d6e4;transform:scaleX(0.5832);text-shadow:0.36px 0 0 #d4d6e4,-0.36px 0 0 #d4d6e4;">TRIGGER</span>
<svg class="b" style="left:0.0px;top:0.0px;" width="2098.0" height="1375.0" viewBox="0 0 2098.0 1375.0"><path d="M143.61 913.41 A22.3 22.3 0 1 1 166.59 913.41" fill="none" stroke="#50556a" stroke-width="1.5"/><path d="M155.10 872.00 A22.3 22.3 0 0 1 177.32 892.36" fill="none" stroke="#edb900" stroke-width="3"/><path d="M178.51 892.25 L167.35 893.23" stroke="#edb900" stroke-width="2" fill="none"/><rect x="-6.0" y="-6.0" width="12" height="12" fill="none" stroke="#edb900" stroke-width="1.9" transform="translate(155.1,894.3) rotate(130)"/><path d="M284.66 913.41 A22.3 22.3 0 1 1 307.64 913.41" fill="none" stroke="#50556a" stroke-width="1.5"/><path d="M284.66 913.41 A22.3 22.3 0 0 1 296.15 872.00" fill="none" stroke="#edb900" stroke-width="3"/><path d="M296.15 870.80 L296.15 882.00" stroke="#edb900" stroke-width="2" fill="none"/><rect x="-6.0" y="-6.0" width="12" height="12" fill="none" stroke="#edb900" stroke-width="1.9" transform="translate(296.15,894.3) rotate(45)"/><path d="M425.71 913.41 A22.3 22.3 0 1 1 448.69 913.41" fill="none" stroke="#50556a" stroke-width="1.5"/><path d="M425.71 913.41 A22.3 22.3 0 0 1 437.20 872.00" fill="none" stroke="#edb900" stroke-width="3"/><path d="M437.20 870.80 L437.20 882.00" stroke="#edb900" stroke-width="2" fill="none"/><rect x="-6.0" y="-6.0" width="12" height="12" fill="none" stroke="#edb900" stroke-width="1.9" transform="translate(437.20000000000005,894.3) rotate(45)"/><path d="M566.76 913.41 A22.3 22.3 0 1 1 589.74 913.41" fill="none" stroke="#50556a" stroke-width="1.5"/><path d="M566.76 913.41 A22.3 22.3 0 0 1 571.73 872.97" fill="none" stroke="#edb900" stroke-width="3"/><path d="M571.38 871.83 L574.65 882.54" stroke="#edb900" stroke-width="2" fill="none"/><rect x="-6.0" y="-6.0" width="12" height="12" fill="none" stroke="#edb900" stroke-width="1.9" transform="translate(578.25,894.3) rotate(28)"/><path d="M707.81 913.41 A22.3 22.3 0 1 1 730.79 913.41" fill="none" stroke="#50556a" stroke-width="1.5"/><path d="M707.81 913.41 A22.3 22.3 0 0 1 701.73 880.57" fill="none" stroke="#edb900" stroke-width="3"/><path d="M700.78 879.83 L709.61 886.73" stroke="#edb900" stroke-width="2" fill="none"/><rect x="-6.0" y="-6.0" width="12" height="12" fill="none" stroke="#edb900" stroke-width="1.9" transform="translate(719.3000000000001,894.3) rotate(-7)"/><path d="M848.86 913.41 A22.3 22.3 0 1 1 871.84 913.41" fill="none" stroke="#50556a" stroke-width="1.5"/><path d="M848.86 913.41 A22.3 22.3 0 0 1 844.04 909.51" fill="none" stroke="#edb900" stroke-width="3"/><path d="M843.16 910.33 L851.35 902.69" stroke="#edb900" stroke-width="2" fill="none"/><rect x="-6.0" y="-6.0" width="12" height="12" fill="none" stroke="#edb900" stroke-width="1.9" transform="translate(860.35,894.3) rotate(-88)"/><path d="M989.91 913.41 A22.3 22.3 0 1 1 1012.89 913.41" fill="none" stroke="#50556a" stroke-width="1.5"/><path d="M989.91 913.41 A22.3 22.3 0 0 1 982.91 906.77" fill="none" stroke="#edb900" stroke-width="3"/><path d="M981.92 907.44 L991.20 901.18" stroke="#edb900" stroke-width="2" fill="none"/><rect x="-6.0" y="-6.0" width="12" height="12" fill="none" stroke="#edb900" stroke-width="1.9" transform="translate(1001.4000000000001,894.3) rotate(-79)"/><path d="M1130.96 913.41 A22.3 22.3 0 1 1 1153.94 913.41" fill="none" stroke="#50556a" stroke-width="1.5"/><path d="M1130.96 913.41 A22.3 22.3 0 0 1 1122.95 883.49" fill="none" stroke="#edb900" stroke-width="3"/><path d="M1121.90 882.91 L1131.69 888.34" stroke="#edb900" stroke-width="2" fill="none"/><rect x="-6.0" y="-6.0" width="12" height="12" fill="none" stroke="#edb900" stroke-width="1.9" transform="translate(1142.45,894.3) rotate(-16)"/><circle cx="1218" cy="892.5" r="4.5" fill="#3a3008"/></svg>
<div class="b" style="left:1268.5px;top:880px;width:49.4px;height:34px;box-shadow:inset 0 0 0 1.6px #4a4f63;border-radius:7px;background:#161616;"></div>
<span class="t" style="left:1277.5px;top:885.5px;font-size:21.08px;line-height:23px;color:#fff;transform:scaleX(0.5249);text-shadow:0.42px 0 0 #fff,-0.42px 0 0 #fff;">NONE</span>
<div class="b" style="left:71px;top:938.5px;width:1306px;height:396px;background:linear-gradient(to bottom,#1b1b1b 0%,#131313 45%,#0d0d0d 100%);"></div>
<div class="b" style="left:71px;top:938.5px;width:144.5px;height:396px;background:linear-gradient(to bottom,#29272b 0%,#1e1d20 45%,#111 100%);"></div>
<div class="b" style="left:215.5px;top:938.5px;width:1.2px;height:396.0px;background:#070707;"></div>
<div class="b" style="left:360.6px;top:938.5px;width:1.2px;height:396.0px;background:#070707;"></div>
<div class="b" style="left:505.7px;top:938.5px;width:1.2px;height:396.0px;background:#070707;"></div>
<div class="b" style="left:650.8px;top:938.5px;width:1.2px;height:396.0px;background:#070707;"></div>
<div class="b" style="left:795.9px;top:938.5px;width:1.2px;height:396.0px;background:#070707;"></div>
<div class="b" style="left:941.0px;top:938.5px;width:1.2px;height:396.0px;background:#070707;"></div>
<div class="b" style="left:1086.1px;top:938.5px;width:1.2px;height:396.0px;background:#070707;"></div>
<div class="b" style="left:1231.2px;top:938.5px;width:1.2px;height:396.0px;background:#070707;"></div>
<div class="b" style="left:98.6px;top:956.8px;width:84.1px;height:48.2px;border:3px solid #fff;border-radius:10px;background:#000;overflow:hidden;"><svg width="84" height="48" viewBox="0 0 84 48" style="position:absolute;left:0;top:0;overflow:hidden"><path d="M42 25 L70.9 29.0 M42 25 L66.0 34.0 M42 25 L70.5 44.0 M42 25 L57.7 42.0 M42 25 L56.6 52.0 M42 25 L48.3 51.5 M42 25 L41.3 46.9 M42 25 L33.3 53.5 M42 25 L30.3 43.8 M42 25 L20.6 45.6 M42 25 L21.5 37.0 M42 25 L18.6 32.3 M42 25 L11.0 27.6 M42 25 L3.7 19.8 M42 25 L18.5 16.2 M42 25 L20.0 10.4 M42 25 L19.6 0.7 M42 25 L24.0 -8.3 M42 25 L34.8 -5.1 M42 25 L42.9 -2.7 M42 25 L53.1 -11.2 M42 25 L53.8 6.1 M42 25 L68.9 -0.9 M42 25 L66.0 10.9 M42 25 L66.4 17.4 M42 25 L67.2 22.9 M70.9 29.0 L66.0 34.0 M70.5 44.0 L57.7 42.0 M56.6 52.0 L48.3 51.5 M41.3 46.9 L33.3 53.5 M30.3 43.8 L20.6 45.6 M21.5 37.0 L18.6 32.3 M11.0 27.6 L3.7 19.8 M18.5 16.2 L20.0 10.4 M19.6 0.7 L24.0 -8.3 M34.8 -5.1 L42.9 -2.7 M53.1 -11.2 L53.8 6.1 M68.9 -0.9 L66.0 10.9 M66.4 17.4 L67.2 22.9 " stroke="#f2d800" stroke-width="1.1" fill="none"/><circle cx="42" cy="25" r="5.5" fill="#fff200"/><circle cx="42" cy="25" r="8" fill="#ffee00" fill-opacity="0.5"/></svg></div>
<div class="b" style="left:96.5px;top:1029.1px;width:45.1px;height:35.7px;background:#edb900;border-radius:10px;"></div>
<span class="t" style="left:116.2px;top:1037.5px;font-size:18.90px;line-height:21px;color:#1a1500;transform:scaleX(0.5459);">1</span>
<div class="b" style="left:147.3px;top:1029.1px;width:45.0px;height:35.7px;background:#3b3b3b;border-radius:10px;"></div>
<span class="t" style="left:165.3px;top:1037.5px;font-size:18.90px;line-height:21px;color:#fff;transform:scaleX(0.7256);">S</span>
<div class="b" style="left:142.9px;top:1108px;width:1.8px;height:196px;background:linear-gradient(to bottom,#fff 0%,rgba(255,255,255,0.75) 40%,rgba(255,255,255,0.25) 80%,rgba(255,255,255,0) 100%);"></div>
<svg class="b" style="left:0.0px;top:0.0px;" width="2098.0" height="1375.0" viewBox="0 0 2098.0 1375.0"><path d="M143.8 1082.2 L157.60000000000002 1096 L143.8 1109.8 L130.0 1096 Z" fill="#5c4600" stroke="#edb900" stroke-width="2.2" stroke-linejoin="round"/></svg>
<div class="b" style="left:243.7px;top:956.8px;width:84.1px;height:48.2px;border:3px solid #7d7d7d;border-radius:10px;background:#000;overflow:hidden;"></div>
<div class="b" style="left:241.6px;top:1029.1px;width:45.1px;height:35.7px;background:#3b3b3b;border-radius:10px;"></div>
<span class="t" style="left:259.5px;top:1037.5px;font-size:18.90px;line-height:21px;color:#fff;transform:scaleX(0.8810);">2</span>
<div class="b" style="left:292.4px;top:1029.1px;width:45.0px;height:35.7px;background:#3b3b3b;border-radius:10px;"></div>
<span class="t" style="left:310.4px;top:1037.5px;font-size:18.90px;line-height:21px;color:#fff;transform:scaleX(0.7256);">S</span>
<div class="b" style="left:288.0px;top:1108px;width:1.8px;height:196px;background:linear-gradient(to bottom,#fff 0%,rgba(255,255,255,0.75) 40%,rgba(255,255,255,0.25) 80%,rgba(255,255,255,0) 100%);"></div>
<svg class="b" style="left:0.0px;top:0.0px;" width="2098.0" height="1375.0" viewBox="0 0 2098.0 1375.0"><path d="M288.9 1082.2 L302.7 1096 L288.9 1109.8 L275.09999999999997 1096 Z" fill="#5c4600" stroke="#edb900" stroke-width="2.2" stroke-linejoin="round"/></svg>
<div class="b" style="left:388.8px;top:956.8px;width:84.1px;height:48.2px;border:3px solid #7d7d7d;border-radius:10px;background:#000;overflow:hidden;"></div>
<div class="b" style="left:386.7px;top:1029.1px;width:45.1px;height:35.7px;background:#3b3b3b;border-radius:10px;"></div>
<span class="t" style="left:404.6px;top:1037.5px;font-size:18.90px;line-height:21px;color:#fff;transform:scaleX(0.8810);">3</span>
<div class="b" style="left:437.5px;top:1029.1px;width:45.0px;height:35.7px;background:#3b3b3b;border-radius:10px;"></div>
<span class="t" style="left:455.5px;top:1037.5px;font-size:18.90px;line-height:21px;color:#fff;transform:scaleX(0.7256);">S</span>
<div class="b" style="left:433.1px;top:1108px;width:1.8px;height:196px;background:linear-gradient(to bottom,#fff 0%,rgba(255,255,255,0.75) 40%,rgba(255,255,255,0.25) 80%,rgba(255,255,255,0) 100%);"></div>
<svg class="b" style="left:0.0px;top:0.0px;" width="2098.0" height="1375.0" viewBox="0 0 2098.0 1375.0"><path d="M434.0 1082.2 L447.8 1096 L434.0 1109.8 L420.2 1096 Z" fill="#5c4600" stroke="#edb900" stroke-width="2.2" stroke-linejoin="round"/></svg>
<div class="b" style="left:533.9px;top:956.8px;width:84.1px;height:48.2px;border:3px solid #7d7d7d;border-radius:10px;background:#000;overflow:hidden;"></div>
<div class="b" style="left:531.8px;top:1029.1px;width:45.1px;height:35.7px;background:#3b3b3b;border-radius:10px;"></div>
<span class="t" style="left:549.7px;top:1037.5px;font-size:18.90px;line-height:21px;color:#fff;transform:scaleX(0.8810);">4</span>
<div class="b" style="left:582.6px;top:1029.1px;width:45.0px;height:35.7px;background:#3b3b3b;border-radius:10px;"></div>
<span class="t" style="left:600.6px;top:1037.5px;font-size:18.90px;line-height:21px;color:#fff;transform:scaleX(0.7256);">S</span>
<div class="b" style="left:578.2px;top:1108px;width:1.8px;height:196px;background:linear-gradient(to bottom,#fff 0%,rgba(255,255,255,0.75) 40%,rgba(255,255,255,0.25) 80%,rgba(255,255,255,0) 100%);"></div>
<svg class="b" style="left:0.0px;top:0.0px;" width="2098.0" height="1375.0" viewBox="0 0 2098.0 1375.0"><path d="M579.0999999999999 1082.2 L592.8999999999999 1096 L579.0999999999999 1109.8 L565.3 1096 Z" fill="#5c4600" stroke="#edb900" stroke-width="2.2" stroke-linejoin="round"/></svg>
<div class="b" style="left:679.0px;top:956.8px;width:84.1px;height:48.2px;border:3px solid #7d7d7d;border-radius:10px;background:#000;overflow:hidden;"></div>
<div class="b" style="left:676.9px;top:1029.1px;width:45.1px;height:35.7px;background:#3b3b3b;border-radius:10px;"></div>
<span class="t" style="left:694.8px;top:1037.5px;font-size:18.90px;line-height:21px;color:#fff;transform:scaleX(0.8810);">5</span>
<div class="b" style="left:727.7px;top:1029.1px;width:45.0px;height:35.7px;background:#3b3b3b;border-radius:10px;"></div>
<span class="t" style="left:745.7px;top:1037.5px;font-size:18.90px;line-height:21px;color:#fff;transform:scaleX(0.7256);">S</span>
<div class="b" style="left:723.3px;top:1108px;width:1.8px;height:196px;background:linear-gradient(to bottom,#fff 0%,rgba(255,255,255,0.75) 40%,rgba(255,255,255,0.25) 80%,rgba(255,255,255,0) 100%);"></div>
<svg class="b" style="left:0.0px;top:0.0px;" width="2098.0" height="1375.0" viewBox="0 0 2098.0 1375.0"><path d="M724.2 1082.2 L738.0 1096 L724.2 1109.8 L710.4000000000001 1096 Z" fill="#5c4600" stroke="#edb900" stroke-width="2.2" stroke-linejoin="round"/></svg>
<div class="b" style="left:824.1px;top:956.8px;width:84.1px;height:48.2px;border:3px solid #7d7d7d;border-radius:10px;background:#000;overflow:hidden;"></div>
<div class="b" style="left:822.0px;top:1029.1px;width:45.1px;height:35.7px;background:#3b3b3b;border-radius:10px;"></div>
<span class="t" style="left:839.9px;top:1037.5px;font-size:18.90px;line-height:21px;color:#fff;transform:scaleX(0.8810);">6</span>
<div class="b" style="left:872.8px;top:1029.1px;width:45.0px;height:35.7px;background:#3b3b3b;border-radius:10px;"></div>
<span class="t" style="left:890.8px;top:1037.5px;font-size:18.90px;line-height:21px;color:#fff;transform:scaleX(0.7256);">S</span>
<div class="b" style="left:868.4px;top:1108px;width:1.8px;height:196px;background:linear-gradient(to bottom,#fff 0%,rgba(255,255,255,0.75) 40%,rgba(255,255,255,0.25) 80%,rgba(255,255,255,0) 100%);"></div>
<svg class="b" style="left:0.0px;top:0.0px;" width="2098.0" height="1375.0" viewBox="0 0 2098.0 1375.0"><path d="M869.3 1082.2 L883.0999999999999 1096 L869.3 1109.8 L855.5 1096 Z" fill="#5c4600" stroke="#edb900" stroke-width="2.2" stroke-linejoin="round"/></svg>
<div class="b" style="left:969.2px;top:956.8px;width:84.1px;height:48.2px;border:3px solid #7d7d7d;border-radius:10px;background:#f01800;overflow:hidden;"></div>
<div class="b" style="left:967.1px;top:1029.1px;width:45.1px;height:35.7px;background:#edb900;border-radius:10px;"></div>
<span class="t" style="left:985.0px;top:1037.5px;font-size:18.90px;line-height:21px;color:#1a1500;transform:scaleX(0.8810);">7</span>
<div class="b" style="left:1017.9px;top:1029.1px;width:45.0px;height:35.7px;background:#3b3b3b;border-radius:10px;"></div>
<span class="t" style="left:1035.9px;top:1037.5px;font-size:18.90px;line-height:21px;color:#fff;transform:scaleX(0.7256);">S</span>
<div class="b" style="left:1013.5px;top:1108px;width:1.8px;height:196px;background:linear-gradient(to bottom,#fff 0%,rgba(255,255,255,0.75) 40%,rgba(255,255,255,0.25) 80%,rgba(255,255,255,0) 100%);"></div>
<svg class="b" style="left:0.0px;top:0.0px;" width="2098.0" height="1375.0" viewBox="0 0 2098.0 1375.0"><path d="M1014.3999999999999 1082.2 L1028.1999999999998 1096 L1014.3999999999999 1109.8 L1000.5999999999999 1096 Z" fill="#5c4600" stroke="#edb900" stroke-width="2.2" stroke-linejoin="round"/></svg>
<div class="b" style="left:1114.3px;top:956.8px;width:84.1px;height:48.2px;border:3px solid #7d7d7d;border-radius:10px;background:#000;overflow:hidden;"><svg width="84" height="48" viewBox="0 0 84 48" style="position:absolute;left:0;top:0;overflow:hidden"><defs><radialGradient id="t8"><stop offset="0" stop-color="#ff3000" stop-opacity="0.9"/><stop offset="0.5" stop-color="#a00000" stop-opacity="0.5"/><stop offset="1" stop-color="#400000" stop-opacity="0"/></radialGradient></defs><rect width="84" height="48" fill="#0a0000"/><circle cx="42" cy="24" r="20" fill="url(#t8)"/><path d="M46.0 23.8 L61.0 23.0 M45.9 25.0 L61.2 29.1 M45.3 26.2 L52.6 31.2 M44.9 26.8 L58.6 39.8 M43.8 27.6 L48.9 37.4 M42.2 28.0 L42.8 42.1 M41.2 27.9 L38.2 41.8 M40.2 27.6 L35.9 36.5 M39.3 27.0 L26.3 41.2 M38.6 26.1 L23.7 35.6 M38.1 25.0 L29.6 27.2 M38.0 23.8 L22.3 23.0 M38.1 23.0 L30.0 21.0 M38.8 21.6 L27.5 13.1 M39.5 20.9 L27.4 5.6 M40.5 20.3 L33.0 1.8 M41.3 20.1 L38.3 1.9 M42.5 20.0 L45.2 0.0 M43.9 20.5 L48.4 12.4 M44.4 20.8 L50.9 12.1 M45.6 22.2 L57.7 15.9 M45.9 23.0 L57.4 19.9 " stroke="#e01000" stroke-width="1.6" stroke-opacity="0.75" fill="none" stroke-linecap="round"/><circle cx="34.8" cy="23.7" r="0.6" fill="#ffd000"/><circle cx="36.4" cy="31.6" r="0.6" fill="#ffd000"/><circle cx="30.8" cy="17.5" r="0.6" fill="#ffd000"/><circle cx="36.5" cy="12.0" r="0.6" fill="#ffd000"/><circle cx="50.6" cy="13.1" r="0.6" fill="#ffd000"/><circle cx="39.7" cy="19.8" r="0.6" fill="#ffd000"/><circle cx="50.7" cy="13.5" r="0.6" fill="#ffd000"/><circle cx="49.6" cy="18.8" r="0.6" fill="#ffd000"/><circle cx="40.8" cy="18.8" r="0.6" fill="#ffd000"/><circle cx="46.6" cy="15.9" r="0.6" fill="#ffd000"/><circle cx="41.2" cy="27.6" r="0.6" fill="#ffd000"/><circle cx="50.4" cy="13.0" r="0.6" fill="#ffd000"/><circle cx="52.0" cy="30.2" r="0.6" fill="#ffd000"/><circle cx="38.1" cy="26.5" r="0.6" fill="#ffd000"/><circle cx="38.9" cy="35.0" r="0.6" fill="#ffd000"/><circle cx="44.4" cy="21.5" r="0.6" fill="#ffd000"/><circle cx="39.4" cy="21.7" r="0.6" fill="#ffd000"/><circle cx="40.7" cy="17.5" r="0.6" fill="#ffd000"/><circle cx="52.1" cy="14.6" r="0.6" fill="#ffd000"/><circle cx="28.0" cy="23.5" r="0.6" fill="#ffd000"/><circle cx="40.6" cy="27.6" r="0.6" fill="#ffd000"/><circle cx="39.3" cy="22.0" r="0.6" fill="#ffd000"/><circle cx="44.4" cy="31.1" r="0.6" fill="#ffd000"/><circle cx="38.4" cy="21.0" r="0.6" fill="#ffd000"/><circle cx="54.1" cy="27.3" r="0.6" fill="#ffd000"/><circle cx="36.7" cy="36.5" r="0.6" fill="#ffd000"/><circle cx="47.7" cy="19.7" r="0.6" fill="#ffd000"/><circle cx="33.5" cy="26.1" r="0.6" fill="#ffd000"/><circle cx="36.1" cy="16.5" r="0.6" fill="#ffd000"/><circle cx="32.9" cy="20.4" r="0.6" fill="#ffd000"/><circle cx="50.0" cy="20.9" r="0.6" fill="#ffd000"/><circle cx="32.1" cy="28.6" r="0.6" fill="#ffd000"/><circle cx="42.5" cy="30.3" r="0.6" fill="#ffd000"/><circle cx="50.6" cy="22.8" r="0.6" fill="#ffd000"/><circle cx="39.0" cy="23.1" r="0.6" fill="#ffd000"/><circle cx="33.9" cy="28.8" r="0.6" fill="#ffd000"/><circle cx="51.7" cy="25.2" r="0.6" fill="#ffd000"/><circle cx="39.5" cy="21.3" r="0.6" fill="#ffd000"/><circle cx="36.3" cy="18.2" r="0.6" fill="#ffd000"/><circle cx="39.0" cy="17.8" r="0.6" fill="#ffd000"/><rect x="39.5" y="20.5" width="5" height="1.6" fill="#ffe000"/><rect x="39" y="23.5" width="6" height="2" fill="#ffe000"/><rect x="39.5" y="27" width="5" height="1.6" fill="#ffc000"/></svg></div>
<div class="b" style="left:1112.2px;top:1029.1px;width:45.1px;height:35.7px;background:#edb900;border-radius:10px;"></div>
<span class="t" style="left:1130.1px;top:1037.5px;font-size:18.90px;line-height:21px;color:#1a1500;transform:scaleX(0.8810);">8</span>
<div class="b" style="left:1163.0px;top:1029.1px;width:45.0px;height:35.7px;background:#3b3b3b;border-radius:10px;"></div>
<span class="t" style="left:1181.0px;top:1037.5px;font-size:18.90px;line-height:21px;color:#fff;transform:scaleX(0.7256);">S</span>
<div class="b" style="left:1158.6px;top:1108px;width:1.8px;height:196px;background:linear-gradient(to bottom,#fff 0%,rgba(255,255,255,0.75) 40%,rgba(255,255,255,0.25) 80%,rgba(255,255,255,0) 100%);"></div>
<svg class="b" style="left:0.0px;top:0.0px;" width="2098.0" height="1375.0" viewBox="0 0 2098.0 1375.0"><path d="M1159.5 1082.2 L1173.3 1096 L1159.5 1109.8 L1145.7 1096 Z" fill="#5c4600" stroke="#edb900" stroke-width="2.2" stroke-linejoin="round"/></svg>
<div class="b" style="left:1259.4px;top:956.8px;width:84.1px;height:48.2px;border:3px solid #7d7d7d;border-radius:10px;background:#000;overflow:hidden;"></div>
<div class="b" style="left:1257.3px;top:1029.1px;width:45.1px;height:35.7px;background:#edb900;border-radius:10px;"></div>
<span class="t" style="left:1275.0px;top:1037.5px;font-size:18.90px;line-height:21px;color:#1a1500;transform:scaleX(0.7571);">B</span>
<div class="b" style="left:1308.1px;top:1029.1px;width:45.0px;height:35.7px;background:#3b3b3b;border-radius:10px;"></div>
<span class="t" style="left:1326.1px;top:1037.5px;font-size:18.90px;line-height:21px;color:#fff;transform:scaleX(0.7256);">S</span>
<div class="b" style="left:1303.7px;top:1108px;width:1.8px;height:196px;background:linear-gradient(to bottom,#fff 0%,rgba(255,255,255,0.75) 40%,rgba(255,255,255,0.25) 80%,rgba(255,255,255,0) 100%);"></div>
<svg class="b" style="left:0.0px;top:0.0px;" width="2098.0" height="1375.0" viewBox="0 0 2098.0 1375.0"><path d="M1304.6 1082.2 L1318.3999999999999 1096 L1304.6 1109.8 L1290.8 1096 Z" fill="#5c4600" stroke="#edb900" stroke-width="2.2" stroke-linejoin="round"/></svg>
<svg class="b" style="left:0.0px;top:0.0px;" width="2098.0" height="1375.0" viewBox="0 0 2098.0 1375.0"><path d="M89 977 L81.8 984 L89 991" fill="none" stroke="#fff" stroke-width="2.7"/><path d="M198.5 977 L205.7 984 L198.5 991" fill="none" stroke="#fff" stroke-width="2.7"/></svg>
<div class="b" style="left:0.0px;top:508.5px;width:69.0px;height:72.5px;background:#fff;"></div>
<svg class="b" style="left:0.0px;top:0.0px;" width="2098.0" height="1375.0" viewBox="0 0 2098.0 1375.0"><path d="M27.1 535.3 V542.8 M27.1 547.2 V554.2" stroke="#111" stroke-width="1.6" fill="none"/><path d="M24.3 545 H29.900000000000002" stroke="#111" stroke-width="1.6" fill="none"/><path d="M34.9 535.3 V537.5999999999999 M34.9 542.0 V554.2" stroke="#111" stroke-width="1.6" fill="none"/><path d="M32.1 539.8 H37.699999999999996" stroke="#111" stroke-width="1.6" fill="none"/><path d="M42.8 535.3 V546.1999999999999 M42.8 550.6 V554.2" stroke="#111" stroke-width="1.6" fill="none"/><path d="M40.0 548.4 H45.599999999999994" stroke="#111" stroke-width="1.6" fill="none"/><path d="M23.3 610.4 H45 M23.3 616.8 H45 M23.3 623.2 H38" stroke="#e8e8e8" stroke-width="1.6" fill="none"/><path d="M40.8 624.6 H46.6 M43.7 621.7 V627.5" stroke="#e8e8e8" stroke-width="1.5" fill="none"/><rect x="25.8" y="684.8" width="22" height="18.5" rx="1.5" fill="none" stroke="#e8e8e8" stroke-width="1.8"/><path d="M22 700.5 V681.5 Q22 680 23.5 680 H43.5" fill="none" stroke="#e8e8e8" stroke-width="1.8"/><path d="M33.6 689.8 L40.4 694 L33.6 698.2 Z" fill="#e8e8e8"/><path d="M31.2 777.6 A13 13 0 1 1 37.6 777.6 A3.4 3.4 0 0 0 31.2 777.6 Z" fill="none" stroke="#e8e8e8" stroke-width="1.5" stroke-linejoin="round"/><circle cx="26.20" cy="766.00" r="1.5" fill="#e8e8e8"/><circle cx="28.60" cy="760.20" r="1.5" fill="#e8e8e8"/><circle cx="34.40" cy="757.80" r="1.5" fill="#e8e8e8"/><circle cx="40.20" cy="760.20" r="1.5" fill="#e8e8e8"/><circle cx="42.60" cy="766.00" r="1.5" fill="#e8e8e8"/><rect x="23.6" y="831" width="22.6" height="16" rx="1.5" fill="none" stroke="#e8e8e8" stroke-width="1.4"/><path d="M29.8 831 V847" stroke="#e8e8e8" stroke-width="1.1"/><path d="M25.6 837.2 L27.8 838.8 L25.6 840.4 Z" fill="#e8e8e8"/><path d="M32.0 837.6 V839.6" stroke="#e8e8e8" stroke-width="1"/><path d="M33.3 836.6 V840.6" stroke="#e8e8e8" stroke-width="1"/><path d="M34.6 835.9 V841.4" stroke="#e8e8e8" stroke-width="1"/><path d="M35.9 837.1 V840.1" stroke="#e8e8e8" stroke-width="1"/><path d="M37.2 835.6 V841.6" stroke="#e8e8e8" stroke-width="1"/><path d="M38.5 836.4 V840.9" stroke="#e8e8e8" stroke-width="1"/><path d="M39.8 835.6 V841.6" stroke="#e8e8e8" stroke-width="1"/><path d="M41.1 837.1 V840.1" stroke="#e8e8e8" stroke-width="1"/><path d="M42.4 836.1 V841.1" stroke="#e8e8e8" stroke-width="1"/><path d="M43.7 837.4 V839.9" stroke="#e8e8e8" stroke-width="1"/><path d="M31.5 844.6 H44.5" stroke="#e8e8e8" stroke-width="0.9"/><circle cx="37" cy="844.6" r="1.1" fill="#e8e8e8"/><rect x="23.8" y="1344" width="21.8" height="14" rx="2.5" fill="none" stroke="#e8e8e8" stroke-width="1.8"/><path d="M28.6 1349 V1339.5 A6.1 6.1 0 0 1 40.8 1339.5 V1349" fill="none" stroke="#e8e8e8" stroke-width="1.8"/></svg>
<div class="b" style="left:71.0px;top:73.0px;width:1306.0px;height:712.0px;background:#000;"></div>
<svg class="b" style="left:93px;top:73px;overflow:hidden;" width="1263" height="712" viewBox="93 73 1263 712"><defs><path id="c0" d="M-259.0 1.0 L-208.0 -60.0 M-217.3 65.2 L-259.0 1.0 M-217.3 65.2 L-220.1 66.0 M-259.0 1.0 L-262.4 1.0 M-227.3 -66.3 L-230.3 -67.2" fill="none" stroke-linecap="round"/><path id="c1" d="M35.3 -254.2 L78.0 -174.1 M103.0 -227.5 L177.1 -207.5 M35.3 -254.2 L35.8 -257.5 M103.0 -227.5 L104.3 -230.5 M177.1 -207.5 L179.4 -210.2" fill="none" stroke-linecap="round"/><path id="c2" d="M24.6 152.6 L102.3 218.4 M39.6 256.1 L-30.5 237.7 M102.3 218.4 L103.6 221.2 M39.6 256.1 L40.1 259.4 M-30.5 237.7 L-30.9 240.8" fill="none" stroke-linecap="round"/><path id="c3" d="M-179.9 -206.5 L-147.2 -95.7 M-80.5 -174.1 L-83.8 -97.3 M-61.1 -135.1 L-18.8 -122.4 M-241.3 -153.1 L-244.4 -155.1 M-179.9 -206.5 L-182.2 -209.2 M-80.5 -174.1 L-81.5 -176.4" fill="none" stroke-linecap="round"/><path id="c4" d="M-30.5 -209.1 L16.9 -123.0 M-30.5 -209.1 L-30.9 -211.8" fill="none" stroke-linecap="round"/><path id="c5" d="M-30.5 219.4 L-118.9 266.1 M-64.5 142.6 L-163.9 192.7 M-83.8 95.9 L-138.9 90.9 M-110.5 32.5 L-138.9 90.9 M-217.3 65.2 L-137.2 0.2 M-118.9 266.1 L-120.4 269.6 M-163.9 192.7 L-166.0 195.2 M-138.9 90.9 L-140.7 92.1" fill="none" stroke-linecap="round"/><path id="c6" d="M136.4 37.5 L197.1 121.6 M108.0 70.2 L98.0 107.6 M49.6 101.9 L121.4 136.0 M279.2 76.9 L282.8 77.9 M197.1 121.6 L199.7 123.2 M121.4 136.0 L123.0 137.8" fill="none" stroke-linecap="round"/><path id="c7" d="M126.4 -146.4 L240.5 -155.7 M114.7 -74.0 L208.1 -61.7 M129.7 -39.0 L135.4 -2.3 M203.1 -2.8 L279.2 76.9 M240.5 -155.7 L243.6 -157.7 M208.1 -61.7 L210.8 -62.5 M203.1 -2.8 L205.7 -2.8" fill="none" stroke-linecap="round"/><filter id="bl1" x="-20%" y="-20%" width="140%" height="140%"><feGaussianBlur stdDeviation="1.1"/></filter><filter id="bl3" x="-20%" y="-20%" width="140%" height="140%"><feGaussianBlur stdDeviation="5"/></filter><radialGradient id="cg"><stop offset="0" stop-color="#ffff00"/><stop offset="0.72" stop-color="#ffff00"/><stop offset="0.88" stop-color="#ffa000" stop-opacity="0.85"/><stop offset="1" stop-color="#ff2000" stop-opacity="0"/></radialGradient><radialGradient id="sg" gradientUnits="userSpaceOnUse" cx="0" cy="0" r="300"><stop offset="0" stop-color="#ffff00"/><stop offset="0.55" stop-color="#fff200"/><stop offset="0.78" stop-color="#ffa800"/><stop offset="1" stop-color="#ff5000"/></radialGradient><radialGradient id="sg2" gradientUnits="userSpaceOnUse" cx="0" cy="0" r="300"><stop offset="0" stop-color="#ffc800"/><stop offset="0.45" stop-color="#ff8800"/><stop offset="1" stop-color="#ff2800"/></radialGradient></defs><rect x="93" y="73" width="1263" height="712" fill="#0b0000"/><g transform="translate(724.1 429.2)"><g stroke="#ff1400" style="mix-blend-mode:screen"><use href="#c0" transform="scale(1.0130)" stroke-width="1.45" stroke-opacity="0.905"/><use href="#c0" transform="scale(1.0262)" stroke-width="1.45" stroke-opacity="0.864"/><use href="#c0" transform="scale(1.0395)" stroke-width="1.45" stroke-opacity="0.825"/><use href="#c0" transform="scale(1.0530)" stroke-width="1.45" stroke-opacity="0.789"/><use href="#c0" transform="scale(1.0667)" stroke-width="1.45" stroke-opacity="0.756"/><use href="#c0" transform="scale(1.0806)" stroke-width="1.45" stroke-opacity="0.724"/><use href="#c0" transform="scale(1.0946)" stroke-width="1.45" stroke-opacity="0.695"/><use href="#c0" transform="scale(1.1089)" stroke-width="1.45" stroke-opacity="0.667"/><use href="#c0" transform="scale(1.1233)" stroke-width="1.45" stroke-opacity="0.641"/><use href="#c0" transform="scale(1.1379)" stroke-width="1.45" stroke-opacity="0.616"/><use href="#c0" transform="scale(1.1527)" stroke-width="1.45" stroke-opacity="0.592"/><use href="#c0" transform="scale(1.1677)" stroke-width="1.45" stroke-opacity="0.570"/><use href="#c0" transform="scale(1.1828)" stroke-width="1.45" stroke-opacity="0.548"/><use href="#c0" transform="scale(1.1982)" stroke-width="1.45" stroke-opacity="0.528"/><use href="#c0" transform="scale(1.2138)" stroke-width="1.45" stroke-opacity="0.508"/><use href="#c0" transform="scale(1.2296)" stroke-width="1.45" stroke-opacity="0.490"/><use href="#c0" transform="scale(1.2455)" stroke-width="1.45" stroke-opacity="0.472"/><use href="#c0" transform="scale(1.2617)" stroke-width="1.45" stroke-opacity="0.454"/><use href="#c0" transform="scale(1.2781)" stroke-width="1.45" stroke-opacity="0.437"/><use href="#c0" transform="scale(1.2948)" stroke-width="1.45" stroke-opacity="0.421"/><use href="#c0" transform="scale(1.3116)" stroke-width="1.45" stroke-opacity="0.405"/><use href="#c0" transform="scale(1.3286)" stroke-width="1.45" stroke-opacity="0.390"/><use href="#c0" transform="scale(1.3459)" stroke-width="1.45" stroke-opacity="0.375"/><use href="#c0" transform="scale(1.3634)" stroke-width="1.45" stroke-opacity="0.361"/><use href="#c0" transform="scale(1.3811)" stroke-width="1.45" stroke-opacity="0.347"/><use href="#c0" transform="scale(1.3991)" stroke-width="1.45" stroke-opacity="0.333"/><use href="#c0" transform="scale(1.4173)" stroke-width="1.45" stroke-opacity="0.320"/><use href="#c0" transform="scale(1.4357)" stroke-width="1.45" stroke-opacity="0.306"/><use href="#c0" transform="scale(1.4544)" stroke-width="1.45" stroke-opacity="0.294"/><use href="#c0" transform="scale(1.4733)" stroke-width="1.45" stroke-opacity="0.281"/><use href="#c0" transform="scale(1.4924)" stroke-width="1.45" stroke-opacity="0.269"/><use href="#c0" transform="scale(1.5118)" stroke-width="1.45" stroke-opacity="0.257"/><use href="#c0" transform="scale(1.5315)" stroke-width="1.45" stroke-opacity="0.245"/><use href="#c0" transform="scale(1.5514)" stroke-width="1.45" stroke-opacity="0.234"/><use href="#c0" transform="scale(1.5716)" stroke-width="1.45" stroke-opacity="0.223"/><use href="#c0" transform="scale(1.5920)" stroke-width="1.45" stroke-opacity="0.212"/><use href="#c0" transform="scale(1.6127)" stroke-width="1.45" stroke-opacity="0.201"/><use href="#c0" transform="scale(1.6336)" stroke-width="1.45" stroke-opacity="0.190"/><use href="#c0" transform="scale(1.6549)" stroke-width="1.45" stroke-opacity="0.180"/><use href="#c0" transform="scale(1.6764)" stroke-width="1.45" stroke-opacity="0.170"/><use href="#c0" transform="scale(1.6982)" stroke-width="1.45" stroke-opacity="0.160"/><use href="#c0" transform="scale(1.7203)" stroke-width="1.45" stroke-opacity="0.150"/><use href="#c0" transform="scale(1.7426)" stroke-width="1.45" stroke-opacity="0.141"/><use href="#c0" transform="scale(1.7653)" stroke-width="1.45" stroke-opacity="0.131"/><use href="#c0" transform="scale(1.7882)" stroke-width="1.45" stroke-opacity="0.122"/><use href="#c0" transform="scale(1.8115)" stroke-width="1.45" stroke-opacity="0.113"/><use href="#c0" transform="scale(1.8350)" stroke-width="1.45" stroke-opacity="0.105"/><use href="#c0" transform="scale(1.8589)" stroke-width="1.45" stroke-opacity="0.096"/><use href="#c0" transform="scale(1.8831)" stroke-width="1.45" stroke-opacity="0.088"/><use href="#c0" transform="scale(1.9075)" stroke-width="1.45" stroke-opacity="0.080"/><use href="#c0" transform="scale(1.9323)" stroke-width="1.45" stroke-opacity="0.073"/><use href="#c0" transform="scale(1.9575)" stroke-width="1.45" stroke-opacity="0.065"/><use href="#c0" transform="scale(1.9829)" stroke-width="1.45" stroke-opacity="0.058"/><use href="#c0" transform="scale(2.0087)" stroke-width="1.45" stroke-opacity="0.051"/><use href="#c0" transform="scale(2.0348)" stroke-width="1.45" stroke-opacity="0.045"/><use href="#c0" transform="scale(2.0612)" stroke-width="1.45" stroke-opacity="0.038"/><use href="#c0" transform="scale(2.0880)" stroke-width="1.45" stroke-opacity="0.032"/><use href="#c0" transform="scale(2.1152)" stroke-width="1.45" stroke-opacity="0.027"/><use href="#c0" transform="scale(2.1427)" stroke-width="1.45" stroke-opacity="0.021"/><use href="#c0" transform="scale(2.1705)" stroke-width="1.45" stroke-opacity="0.016"/><use href="#c0" transform="scale(2.1988)" stroke-width="1.45" stroke-opacity="0.012"/><use href="#c0" transform="scale(2.2273)" stroke-width="1.45" stroke-opacity="0.008"/><use href="#c0" transform="scale(2.2563)" stroke-width="1.45" stroke-opacity="0.005"/><use href="#c0" transform="scale(2.2856)" stroke-width="1.45" stroke-opacity="0.002"/></g><g stroke="#ff1400" style="mix-blend-mode:screen"><use href="#c1" transform="scale(1.0130)" stroke-width="1.45" stroke-opacity="0.902"/><use href="#c1" transform="scale(1.0262)" stroke-width="1.45" stroke-opacity="0.858"/><use href="#c1" transform="scale(1.0395)" stroke-width="1.45" stroke-opacity="0.816"/><use href="#c1" transform="scale(1.0530)" stroke-width="1.45" stroke-opacity="0.778"/><use href="#c1" transform="scale(1.0667)" stroke-width="1.45" stroke-opacity="0.741"/><use href="#c1" transform="scale(1.0806)" stroke-width="1.45" stroke-opacity="0.707"/><use href="#c1" transform="scale(1.0946)" stroke-width="1.45" stroke-opacity="0.675"/><use href="#c1" transform="scale(1.1089)" stroke-width="1.45" stroke-opacity="0.644"/><use href="#c1" transform="scale(1.1233)" stroke-width="1.45" stroke-opacity="0.615"/><use href="#c1" transform="scale(1.1379)" stroke-width="1.45" stroke-opacity="0.588"/><use href="#c1" transform="scale(1.1527)" stroke-width="1.45" stroke-opacity="0.562"/><use href="#c1" transform="scale(1.1677)" stroke-width="1.45" stroke-opacity="0.537"/><use href="#c1" transform="scale(1.1828)" stroke-width="1.45" stroke-opacity="0.513"/><use href="#c1" transform="scale(1.1982)" stroke-width="1.45" stroke-opacity="0.491"/><use href="#c1" transform="scale(1.2138)" stroke-width="1.45" stroke-opacity="0.469"/><use href="#c1" transform="scale(1.2296)" stroke-width="1.45" stroke-opacity="0.448"/><use href="#c1" transform="scale(1.2455)" stroke-width="1.45" stroke-opacity="0.427"/><use href="#c1" transform="scale(1.2617)" stroke-width="1.45" stroke-opacity="0.408"/><use href="#c1" transform="scale(1.2781)" stroke-width="1.45" stroke-opacity="0.389"/><use href="#c1" transform="scale(1.2948)" stroke-width="1.45" stroke-opacity="0.371"/><use href="#c1" transform="scale(1.3116)" stroke-width="1.45" stroke-opacity="0.353"/><use href="#c1" transform="scale(1.3286)" stroke-width="1.45" stroke-opacity="0.336"/><use href="#c1" transform="scale(1.3459)" stroke-width="1.45" stroke-opacity="0.320"/><use href="#c1" transform="scale(1.3634)" stroke-width="1.45" stroke-opacity="0.303"/><use href="#c1" transform="scale(1.3811)" stroke-width="1.45" stroke-opacity="0.288"/><use href="#c1" transform="scale(1.3991)" stroke-width="1.45" stroke-opacity="0.272"/><use href="#c1" transform="scale(1.4173)" stroke-width="1.45" stroke-opacity="0.258"/><use href="#c1" transform="scale(1.4357)" stroke-width="1.45" stroke-opacity="0.243"/><use href="#c1" transform="scale(1.4544)" stroke-width="1.45" stroke-opacity="0.229"/><use href="#c1" transform="scale(1.4733)" stroke-width="1.45" stroke-opacity="0.215"/><use href="#c1" transform="scale(1.4924)" stroke-width="1.45" stroke-opacity="0.202"/><use href="#c1" transform="scale(1.5118)" stroke-width="1.45" stroke-opacity="0.189"/><use href="#c1" transform="scale(1.5315)" stroke-width="1.45" stroke-opacity="0.176"/><use href="#c1" transform="scale(1.5514)" stroke-width="1.45" stroke-opacity="0.164"/><use href="#c1" transform="scale(1.5716)" stroke-width="1.45" stroke-opacity="0.152"/><use href="#c1" transform="scale(1.5920)" stroke-width="1.45" stroke-opacity="0.140"/><use href="#c1" transform="scale(1.6127)" stroke-width="1.45" stroke-opacity="0.129"/><use href="#c1" transform="scale(1.6336)" stroke-width="1.45" stroke-opacity="0.118"/><use href="#c1" transform="scale(1.6549)" stroke-width="1.45" stroke-opacity="0.108"/><use href="#c1" transform="scale(1.6764)" stroke-width="1.45" stroke-opacity="0.097"/><use href="#c1" transform="scale(1.6982)" stroke-width="1.45" stroke-opacity="0.087"/><use href="#c1" transform="scale(1.7203)" stroke-width="1.45" stroke-opacity="0.078"/><use href="#c1" transform="scale(1.7426)" stroke-width="1.45" stroke-opacity="0.069"/><use href="#c1" transform="scale(1.7653)" stroke-width="1.45" stroke-opacity="0.060"/><use href="#c1" transform="scale(1.7882)" stroke-width="1.45" stroke-opacity="0.051"/><use href="#c1" transform="scale(1.8115)" stroke-width="1.45" stroke-opacity="0.043"/><use href="#c1" transform="scale(1.8350)" stroke-width="1.45" stroke-opacity="0.036"/><use href="#c1" transform="scale(1.8589)" stroke-width="1.45" stroke-opacity="0.029"/><use href="#c1" transform="scale(1.8831)" stroke-width="1.45" stroke-opacity="0.022"/><use href="#c1" transform="scale(1.9075)" stroke-width="1.45" stroke-opacity="0.016"/><use href="#c1" transform="scale(1.9323)" stroke-width="1.45" stroke-opacity="0.011"/><use href="#c1" transform="scale(1.9575)" stroke-width="1.45" stroke-opacity="0.006"/><use href="#c1" transform="scale(1.9829)" stroke-width="1.45" stroke-opacity="0.003"/></g><g stroke="#ff1400" style="mix-blend-mode:screen"><use href="#c2" transform="scale(1.0130)" stroke-width="1.45" stroke-opacity="0.807"/><use href="#c2" transform="scale(1.0262)" stroke-width="1.45" stroke-opacity="0.768"/><use href="#c2" transform="scale(1.0395)" stroke-width="1.45" stroke-opacity="0.730"/><use href="#c2" transform="scale(1.0530)" stroke-width="1.45" stroke-opacity="0.696"/><use href="#c2" transform="scale(1.0667)" stroke-width="1.45" stroke-opacity="0.663"/><use href="#c2" transform="scale(1.0806)" stroke-width="1.45" stroke-opacity="0.633"/><use href="#c2" transform="scale(1.0946)" stroke-width="1.45" stroke-opacity="0.604"/><use href="#c2" transform="scale(1.1089)" stroke-width="1.45" stroke-opacity="0.576"/><use href="#c2" transform="scale(1.1233)" stroke-width="1.45" stroke-opacity="0.551"/><use href="#c2" transform="scale(1.1379)" stroke-width="1.45" stroke-opacity="0.526"/><use href="#c2" transform="scale(1.1527)" stroke-width="1.45" stroke-opacity="0.503"/><use href="#c2" transform="scale(1.1677)" stroke-width="1.45" stroke-opacity="0.481"/><use href="#c2" transform="scale(1.1828)" stroke-width="1.45" stroke-opacity="0.459"/><use href="#c2" transform="scale(1.1982)" stroke-width="1.45" stroke-opacity="0.439"/><use href="#c2" transform="scale(1.2138)" stroke-width="1.45" stroke-opacity="0.419"/><use href="#c2" transform="scale(1.2296)" stroke-width="1.45" stroke-opacity="0.401"/><use href="#c2" transform="scale(1.2455)" stroke-width="1.45" stroke-opacity="0.382"/><use href="#c2" transform="scale(1.2617)" stroke-width="1.45" stroke-opacity="0.365"/><use href="#c2" transform="scale(1.2781)" stroke-width="1.45" stroke-opacity="0.348"/><use href="#c2" transform="scale(1.2948)" stroke-width="1.45" stroke-opacity="0.332"/><use href="#c2" transform="scale(1.3116)" stroke-width="1.45" stroke-opacity="0.316"/><use href="#c2" transform="scale(1.3286)" stroke-width="1.45" stroke-opacity="0.301"/><use href="#c2" transform="scale(1.3459)" stroke-width="1.45" stroke-opacity="0.286"/><use href="#c2" transform="scale(1.3634)" stroke-width="1.45" stroke-opacity="0.271"/><use href="#c2" transform="scale(1.3811)" stroke-width="1.45" stroke-opacity="0.257"/><use href="#c2" transform="scale(1.3991)" stroke-width="1.45" stroke-opacity="0.244"/><use href="#c2" transform="scale(1.4173)" stroke-width="1.45" stroke-opacity="0.230"/><use href="#c2" transform="scale(1.4357)" stroke-width="1.45" stroke-opacity="0.218"/><use href="#c2" transform="scale(1.4544)" stroke-width="1.45" stroke-opacity="0.205"/><use href="#c2" transform="scale(1.4733)" stroke-width="1.45" stroke-opacity="0.193"/><use href="#c2" transform="scale(1.4924)" stroke-width="1.45" stroke-opacity="0.181"/><use href="#c2" transform="scale(1.5118)" stroke-width="1.45" stroke-opacity="0.169"/><use href="#c2" transform="scale(1.5315)" stroke-width="1.45" stroke-opacity="0.158"/><use href="#c2" transform="scale(1.5514)" stroke-width="1.45" stroke-opacity="0.147"/><use href="#c2" transform="scale(1.5716)" stroke-width="1.45" stroke-opacity="0.136"/><use href="#c2" transform="scale(1.5920)" stroke-width="1.45" stroke-opacity="0.126"/><use href="#c2" transform="scale(1.6127)" stroke-width="1.45" stroke-opacity="0.116"/><use href="#c2" transform="scale(1.6336)" stroke-width="1.45" stroke-opacity="0.106"/><use href="#c2" transform="scale(1.6549)" stroke-width="1.45" stroke-opacity="0.096"/><use href="#c2" transform="scale(1.6764)" stroke-width="1.45" stroke-opacity="0.087"/><use href="#c2" transform="scale(1.6982)" stroke-width="1.45" stroke-opacity="0.078"/><use href="#c2" transform="scale(1.7203)" stroke-width="1.45" stroke-opacity="0.070"/><use href="#c2" transform="scale(1.7426)" stroke-width="1.45" stroke-opacity="0.061"/><use href="#c2" transform="scale(1.7653)" stroke-width="1.45" stroke-opacity="0.054"/><use href="#c2" transform="scale(1.7882)" stroke-width="1.45" stroke-opacity="0.046"/><use href="#c2" transform="scale(1.8115)" stroke-width="1.45" stroke-opacity="0.039"/><use href="#c2" transform="scale(1.8350)" stroke-width="1.45" stroke-opacity="0.032"/><use href="#c2" transform="scale(1.8589)" stroke-width="1.45" stroke-opacity="0.026"/><use href="#c2" transform="scale(1.8831)" stroke-width="1.45" stroke-opacity="0.020"/><use href="#c2" transform="scale(1.9075)" stroke-width="1.45" stroke-opacity="0.015"/><use href="#c2" transform="scale(1.9323)" stroke-width="1.45" stroke-opacity="0.010"/><use href="#c2" transform="scale(1.9575)" stroke-width="1.45" stroke-opacity="0.006"/><use href="#c2" transform="scale(1.9829)" stroke-width="1.45" stroke-opacity="0.003"/></g><g stroke="#ff1400" style="mix-blend-mode:screen"><use href="#c3" transform="scale(1.0130)" stroke-width="2.6" stroke-opacity="0.558"/><use href="#c3" transform="scale(1.0262)" stroke-width="2.6" stroke-opacity="0.503"/><use href="#c3" transform="scale(1.0395)" stroke-width="2.6" stroke-opacity="0.454"/><use href="#c3" transform="scale(1.0530)" stroke-width="2.6" stroke-opacity="0.410"/><use href="#c3" transform="scale(1.0667)" stroke-width="2.6" stroke-opacity="0.371"/><use href="#c3" transform="scale(1.0806)" stroke-width="2.6" stroke-opacity="0.336"/><use href="#c3" transform="scale(1.0946)" stroke-width="2.6" stroke-opacity="0.304"/><use href="#c3" transform="scale(1.1089)" stroke-width="2.6" stroke-opacity="0.275"/><use href="#c3" transform="scale(1.1233)" stroke-width="2.6" stroke-opacity="0.249"/><use href="#c3" transform="scale(1.1379)" stroke-width="2.6" stroke-opacity="0.225"/><use href="#c3" transform="scale(1.1527)" stroke-width="2.6" stroke-opacity="0.204"/><use href="#c3" transform="scale(1.1677)" stroke-width="2.6" stroke-opacity="0.184"/><use href="#c3" transform="scale(1.1828)" stroke-width="2.6" stroke-opacity="0.166"/><use href="#c3" transform="scale(1.1982)" stroke-width="2.6" stroke-opacity="0.149"/><use href="#c3" transform="scale(1.2138)" stroke-width="2.6" stroke-opacity="0.134"/><use href="#c3" transform="scale(1.2296)" stroke-width="2.6" stroke-opacity="0.120"/><use href="#c3" transform="scale(1.2455)" stroke-width="2.6" stroke-opacity="0.107"/><use href="#c3" transform="scale(1.2617)" stroke-width="2.6" stroke-opacity="0.095"/><use href="#c3" transform="scale(1.2781)" stroke-width="2.6" stroke-opacity="0.083"/><use href="#c3" transform="scale(1.2948)" stroke-width="2.6" stroke-opacity="0.073"/><use href="#c3" transform="scale(1.3116)" stroke-width="2.6" stroke-opacity="0.063"/><use href="#c3" transform="scale(1.3286)" stroke-width="2.6" stroke-opacity="0.055"/><use href="#c3" transform="scale(1.3459)" stroke-width="2.6" stroke-opacity="0.047"/><use href="#c3" transform="scale(1.3634)" stroke-width="2.6" stroke-opacity="0.039"/><use href="#c3" transform="scale(1.3811)" stroke-width="2.6" stroke-opacity="0.032"/><use href="#c3" transform="scale(1.3991)" stroke-width="2.6" stroke-opacity="0.026"/><use href="#c3" transform="scale(1.4173)" stroke-width="2.6" stroke-opacity="0.021"/><use href="#c3" transform="scale(1.4357)" stroke-width="2.6" stroke-opacity="0.016"/><use href="#c3" transform="scale(1.4544)" stroke-width="2.6" stroke-opacity="0.012"/><use href="#c3" transform="scale(1.4733)" stroke-width="2.6" stroke-opacity="0.008"/><use href="#c3" transform="scale(1.4924)" stroke-width="2.6" stroke-opacity="0.005"/></g><g stroke="#ff1400" style="mix-blend-mode:screen"><use href="#c4" transform="scale(1.0130)" stroke-width="2.6" stroke-opacity="0.453"/><use href="#c4" transform="scale(1.0262)" stroke-width="2.6" stroke-opacity="0.411"/><use href="#c4" transform="scale(1.0395)" stroke-width="2.6" stroke-opacity="0.374"/><use href="#c4" transform="scale(1.0530)" stroke-width="2.6" stroke-opacity="0.341"/><use href="#c4" transform="scale(1.0667)" stroke-width="2.6" stroke-opacity="0.312"/><use href="#c4" transform="scale(1.0806)" stroke-width="2.6" stroke-opacity="0.285"/><use href="#c4" transform="scale(1.0946)" stroke-width="2.6" stroke-opacity="0.262"/><use href="#c4" transform="scale(1.1089)" stroke-width="2.6" stroke-opacity="0.241"/><use href="#c4" transform="scale(1.1233)" stroke-width="2.6" stroke-opacity="0.222"/><use href="#c4" transform="scale(1.1379)" stroke-width="2.6" stroke-opacity="0.204"/><use href="#c4" transform="scale(1.1527)" stroke-width="2.6" stroke-opacity="0.189"/><use href="#c4" transform="scale(1.1677)" stroke-width="2.6" stroke-opacity="0.174"/><use href="#c4" transform="scale(1.1828)" stroke-width="2.6" stroke-opacity="0.161"/><use href="#c4" transform="scale(1.1982)" stroke-width="2.6" stroke-opacity="0.149"/><use href="#c4" transform="scale(1.2138)" stroke-width="2.6" stroke-opacity="0.138"/><use href="#c4" transform="scale(1.2296)" stroke-width="2.6" stroke-opacity="0.128"/><use href="#c4" transform="scale(1.2455)" stroke-width="2.6" stroke-opacity="0.118"/><use href="#c4" transform="scale(1.2617)" stroke-width="2.6" stroke-opacity="0.109"/><use href="#c4" transform="scale(1.2781)" stroke-width="2.6" stroke-opacity="0.101"/><use href="#c4" transform="scale(1.2948)" stroke-width="2.6" stroke-opacity="0.093"/><use href="#c4" transform="scale(1.3116)" stroke-width="2.6" stroke-opacity="0.086"/><use href="#c4" transform="scale(1.3286)" stroke-width="2.6" stroke-opacity="0.079"/><use href="#c4" transform="scale(1.3459)" stroke-width="2.6" stroke-opacity="0.072"/><use href="#c4" transform="scale(1.3634)" stroke-width="2.6" stroke-opacity="0.066"/><use href="#c4" transform="scale(1.3811)" stroke-width="2.6" stroke-opacity="0.061"/><use href="#c4" transform="scale(1.3991)" stroke-width="2.6" stroke-opacity="0.055"/><use href="#c4" transform="scale(1.4173)" stroke-width="2.6" stroke-opacity="0.050"/><use href="#c4" transform="scale(1.4357)" stroke-width="2.6" stroke-opacity="0.045"/><use href="#c4" transform="scale(1.4544)" stroke-width="2.6" stroke-opacity="0.041"/><use href="#c4" transform="scale(1.4733)" stroke-width="2.6" stroke-opacity="0.036"/><use href="#c4" transform="scale(1.4924)" stroke-width="2.6" stroke-opacity="0.032"/><use href="#c4" transform="scale(1.5118)" stroke-width="2.6" stroke-opacity="0.028"/><use href="#c4" transform="scale(1.5315)" stroke-width="2.6" stroke-opacity="0.024"/><use href="#c4" transform="scale(1.5514)" stroke-width="2.6" stroke-opacity="0.021"/><use href="#c4" transform="scale(1.5716)" stroke-width="2.6" stroke-opacity="0.018"/><use href="#c4" transform="scale(1.5920)" stroke-width="2.6" stroke-opacity="0.015"/><use href="#c4" transform="scale(1.6127)" stroke-width="2.6" stroke-opacity="0.012"/><use href="#c4" transform="scale(1.6336)" stroke-width="2.6" stroke-opacity="0.010"/><use href="#c4" transform="scale(1.6549)" stroke-width="2.6" stroke-opacity="0.007"/><use href="#c4" transform="scale(1.6764)" stroke-width="2.6" stroke-opacity="0.005"/><use href="#c4" transform="scale(1.6982)" stroke-width="2.6" stroke-opacity="0.004"/><use href="#c4" transform="scale(1.7203)" stroke-width="2.6" stroke-opacity="0.002"/><use href="#c4" transform="scale(1.7426)" stroke-width="2.6" stroke-opacity="0.001"/></g><g stroke="#ff1400" style="mix-blend-mode:screen"><use href="#c5" transform="scale(1.0130)" stroke-width="2.6" stroke-opacity="0.453"/><use href="#c5" transform="scale(1.0262)" stroke-width="2.6" stroke-opacity="0.412"/><use href="#c5" transform="scale(1.0395)" stroke-width="2.6" stroke-opacity="0.375"/><use href="#c5" transform="scale(1.0530)" stroke-width="2.6" stroke-opacity="0.342"/><use href="#c5" transform="scale(1.0667)" stroke-width="2.6" stroke-opacity="0.313"/><use href="#c5" transform="scale(1.0806)" stroke-width="2.6" stroke-opacity="0.287"/><use href="#c5" transform="scale(1.0946)" stroke-width="2.6" stroke-opacity="0.264"/><use href="#c5" transform="scale(1.1089)" stroke-width="2.6" stroke-opacity="0.243"/><use href="#c5" transform="scale(1.1233)" stroke-width="2.6" stroke-opacity="0.224"/><use href="#c5" transform="scale(1.1379)" stroke-width="2.6" stroke-opacity="0.207"/><use href="#c5" transform="scale(1.1527)" stroke-width="2.6" stroke-opacity="0.191"/><use href="#c5" transform="scale(1.1677)" stroke-width="2.6" stroke-opacity="0.177"/><use href="#c5" transform="scale(1.1828)" stroke-width="2.6" stroke-opacity="0.164"/><use href="#c5" transform="scale(1.1982)" stroke-width="2.6" stroke-opacity="0.153"/><use href="#c5" transform="scale(1.2138)" stroke-width="2.6" stroke-opacity="0.142"/><use href="#c5" transform="scale(1.2296)" stroke-width="2.6" stroke-opacity="0.131"/><use href="#c5" transform="scale(1.2455)" stroke-width="2.6" stroke-opacity="0.122"/><use href="#c5" transform="scale(1.2617)" stroke-width="2.6" stroke-opacity="0.113"/><use href="#c5" transform="scale(1.2781)" stroke-width="2.6" stroke-opacity="0.105"/><use href="#c5" transform="scale(1.2948)" stroke-width="2.6" stroke-opacity="0.098"/><use href="#c5" transform="scale(1.3116)" stroke-width="2.6" stroke-opacity="0.090"/><use href="#c5" transform="scale(1.3286)" stroke-width="2.6" stroke-opacity="0.084"/><use href="#c5" transform="scale(1.3459)" stroke-width="2.6" stroke-opacity="0.077"/><use href="#c5" transform="scale(1.3634)" stroke-width="2.6" stroke-opacity="0.071"/><use href="#c5" transform="scale(1.3811)" stroke-width="2.6" stroke-opacity="0.065"/><use href="#c5" transform="scale(1.3991)" stroke-width="2.6" stroke-opacity="0.060"/><use href="#c5" transform="scale(1.4173)" stroke-width="2.6" stroke-opacity="0.055"/><use href="#c5" transform="scale(1.4357)" stroke-width="2.6" stroke-opacity="0.050"/><use href="#c5" transform="scale(1.4544)" stroke-width="2.6" stroke-opacity="0.045"/><use href="#c5" transform="scale(1.4733)" stroke-width="2.6" stroke-opacity="0.041"/><use href="#c5" transform="scale(1.4924)" stroke-width="2.6" stroke-opacity="0.037"/><use href="#c5" transform="scale(1.5118)" stroke-width="2.6" stroke-opacity="0.033"/><use href="#c5" transform="scale(1.5315)" stroke-width="2.6" stroke-opacity="0.029"/><use href="#c5" transform="scale(1.5514)" stroke-width="2.6" stroke-opacity="0.026"/><use href="#c5" transform="scale(1.5716)" stroke-width="2.6" stroke-opacity="0.022"/><use href="#c5" transform="scale(1.5920)" stroke-width="2.6" stroke-opacity="0.019"/><use href="#c5" transform="scale(1.6127)" stroke-width="2.6" stroke-opacity="0.016"/><use href="#c5" transform="scale(1.6336)" stroke-width="2.6" stroke-opacity="0.013"/><use href="#c5" transform="scale(1.6549)" stroke-width="2.6" stroke-opacity="0.011"/><use href="#c5" transform="scale(1.6764)" stroke-width="2.6" stroke-opacity="0.009"/><use href="#c5" transform="scale(1.6982)" stroke-width="2.6" stroke-opacity="0.007"/><use href="#c5" transform="scale(1.7203)" stroke-width="2.6" stroke-opacity="0.005"/><use href="#c5" transform="scale(1.7426)" stroke-width="2.6" stroke-opacity="0.003"/><use href="#c5" transform="scale(1.7653)" stroke-width="2.6" stroke-opacity="0.002"/><use href="#c5" transform="scale(1.7882)" stroke-width="2.6" stroke-opacity="0.001"/></g><g stroke="#ff1400" style="mix-blend-mode:screen"><use href="#c6" transform="scale(1.0130)" stroke-width="2.6" stroke-opacity="0.454"/><use href="#c6" transform="scale(1.0262)" stroke-width="2.6" stroke-opacity="0.413"/><use href="#c6" transform="scale(1.0395)" stroke-width="2.6" stroke-opacity="0.377"/><use href="#c6" transform="scale(1.0530)" stroke-width="2.6" stroke-opacity="0.344"/><use href="#c6" transform="scale(1.0667)" stroke-width="2.6" stroke-opacity="0.316"/><use href="#c6" transform="scale(1.0806)" stroke-width="2.6" stroke-opacity="0.290"/><use href="#c6" transform="scale(1.0946)" stroke-width="2.6" stroke-opacity="0.267"/><use href="#c6" transform="scale(1.1089)" stroke-width="2.6" stroke-opacity="0.247"/><use href="#c6" transform="scale(1.1233)" stroke-width="2.6" stroke-opacity="0.229"/><use href="#c6" transform="scale(1.1379)" stroke-width="2.6" stroke-opacity="0.212"/><use href="#c6" transform="scale(1.1527)" stroke-width="2.6" stroke-opacity="0.197"/><use href="#c6" transform="scale(1.1677)" stroke-width="2.6" stroke-opacity="0.183"/><use href="#c6" transform="scale(1.1828)" stroke-width="2.6" stroke-opacity="0.170"/><use href="#c6" transform="scale(1.1982)" stroke-width="2.6" stroke-opacity="0.159"/><use href="#c6" transform="scale(1.2138)" stroke-width="2.6" stroke-opacity="0.148"/><use href="#c6" transform="scale(1.2296)" stroke-width="2.6" stroke-opacity="0.138"/><use href="#c6" transform="scale(1.2455)" stroke-width="2.6" stroke-opacity="0.129"/><use href="#c6" transform="scale(1.2617)" stroke-width="2.6" stroke-opacity="0.121"/><use href="#c6" transform="scale(1.2781)" stroke-width="2.6" stroke-opacity="0.113"/><use href="#c6" transform="scale(1.2948)" stroke-width="2.6" stroke-opacity="0.106"/><use href="#c6" transform="scale(1.3116)" stroke-width="2.6" stroke-opacity="0.099"/><use href="#c6" transform="scale(1.3286)" stroke-width="2.6" stroke-opacity="0.092"/><use href="#c6" transform="scale(1.3459)" stroke-width="2.6" stroke-opacity="0.086"/><use href="#c6" transform="scale(1.3634)" stroke-width="2.6" stroke-opacity="0.080"/><use href="#c6" transform="scale(1.3811)" stroke-width="2.6" stroke-opacity="0.074"/><use href="#c6" transform="scale(1.3991)" stroke-width="2.6" stroke-opacity="0.069"/><use href="#c6" transform="scale(1.4173)" stroke-width="2.6" stroke-opacity="0.064"/><use href="#c6" transform="scale(1.4357)" stroke-width="2.6" stroke-opacity="0.059"/><use href="#c6" transform="scale(1.4544)" stroke-width="2.6" stroke-opacity="0.055"/><use href="#c6" transform="scale(1.4733)" stroke-width="2.6" stroke-opacity="0.050"/><use href="#c6" transform="scale(1.4924)" stroke-width="2.6" stroke-opacity="0.046"/><use href="#c6" transform="scale(1.5118)" stroke-width="2.6" stroke-opacity="0.042"/><use href="#c6" transform="scale(1.5315)" stroke-width="2.6" stroke-opacity="0.038"/><use href="#c6" transform="scale(1.5514)" stroke-width="2.6" stroke-opacity="0.035"/><use href="#c6" transform="scale(1.5716)" stroke-width="2.6" stroke-opacity="0.031"/><use href="#c6" transform="scale(1.5920)" stroke-width="2.6" stroke-opacity="0.028"/><use href="#c6" transform="scale(1.6127)" stroke-width="2.6" stroke-opacity="0.025"/><use href="#c6" transform="scale(1.6336)" stroke-width="2.6" stroke-opacity="0.022"/><use href="#c6" transform="scale(1.6549)" stroke-width="2.6" stroke-opacity="0.019"/><use href="#c6" transform="scale(1.6764)" stroke-width="2.6" stroke-opacity="0.016"/><use href="#c6" transform="scale(1.6982)" stroke-width="2.6" stroke-opacity="0.014"/><use href="#c6" transform="scale(1.7203)" stroke-width="2.6" stroke-opacity="0.011"/><use href="#c6" transform="scale(1.7426)" stroke-width="2.6" stroke-opacity="0.009"/><use href="#c6" transform="scale(1.7653)" stroke-width="2.6" stroke-opacity="0.007"/><use href="#c6" transform="scale(1.7882)" stroke-width="2.6" stroke-opacity="0.006"/><use href="#c6" transform="scale(1.8115)" stroke-width="2.6" stroke-opacity="0.004"/><use href="#c6" transform="scale(1.8350)" stroke-width="2.6" stroke-opacity="0.003"/><use href="#c6" transform="scale(1.8589)" stroke-width="2.6" stroke-opacity="0.001"/><use href="#c6" transform="scale(1.8831)" stroke-width="2.6" stroke-opacity="0.001"/></g><g stroke="#ff1400" style="mix-blend-mode:screen"><use href="#c7" transform="scale(1.0130)" stroke-width="2.8" stroke-opacity="0.669"/><use href="#c7" transform="scale(1.0262)" stroke-width="2.8" stroke-opacity="0.596"/><use href="#c7" transform="scale(1.0395)" stroke-width="2.8" stroke-opacity="0.530"/><use href="#c7" transform="scale(1.0530)" stroke-width="2.8" stroke-opacity="0.472"/><use href="#c7" transform="scale(1.0667)" stroke-width="2.8" stroke-opacity="0.419"/><use href="#c7" transform="scale(1.0806)" stroke-width="2.8" stroke-opacity="0.371"/><use href="#c7" transform="scale(1.0946)" stroke-width="2.8" stroke-opacity="0.328"/><use href="#c7" transform="scale(1.1089)" stroke-width="2.8" stroke-opacity="0.289"/><use href="#c7" transform="scale(1.1233)" stroke-width="2.8" stroke-opacity="0.254"/><use href="#c7" transform="scale(1.1379)" stroke-width="2.8" stroke-opacity="0.222"/><use href="#c7" transform="scale(1.1527)" stroke-width="2.8" stroke-opacity="0.192"/><use href="#c7" transform="scale(1.1677)" stroke-width="2.8" stroke-opacity="0.166"/><use href="#c7" transform="scale(1.1828)" stroke-width="2.8" stroke-opacity="0.142"/><use href="#c7" transform="scale(1.1982)" stroke-width="2.8" stroke-opacity="0.120"/><use href="#c7" transform="scale(1.2138)" stroke-width="2.8" stroke-opacity="0.101"/><use href="#c7" transform="scale(1.2296)" stroke-width="2.8" stroke-opacity="0.083"/><use href="#c7" transform="scale(1.2455)" stroke-width="2.8" stroke-opacity="0.068"/><use href="#c7" transform="scale(1.2617)" stroke-width="2.8" stroke-opacity="0.054"/><use href="#c7" transform="scale(1.2781)" stroke-width="2.8" stroke-opacity="0.042"/><use href="#c7" transform="scale(1.2948)" stroke-width="2.8" stroke-opacity="0.032"/><use href="#c7" transform="scale(1.3116)" stroke-width="2.8" stroke-opacity="0.025"/></g><g stroke="#ff1400" fill="none" style="mix-blend-mode:screen"><path d="M-230.3 -67.2 L-244.5 -153.7" stroke-width="1.47" stroke-opacity="0.905"/><path d="M-244.4 -155.1 L-244.5 -153.7" stroke-width="3.24" stroke-opacity="0.292"/><path d="M-233.2 -68.0 L-247.7 -154.2" stroke-width="1.49" stroke-opacity="0.863"/><path d="M-247.6 -157.1 L-247.7 -154.2" stroke-width="3.28" stroke-opacity="0.285"/><path d="M-236.3 -68.9 L-251.0 -154.8" stroke-width="1.51" stroke-opacity="0.824"/><path d="M-250.8 -159.1 L-251.0 -154.8" stroke-width="3.33" stroke-opacity="0.277"/><path d="M-239.4 -69.8 L-254.4 -155.3" stroke-width="1.53" stroke-opacity="0.787"/><path d="M-254.1 -161.2 L-254.4 -155.3" stroke-width="3.37" stroke-opacity="0.269"/><path d="M-242.5 -70.7 L-257.7 -155.8" stroke-width="1.55" stroke-opacity="0.753"/><path d="M-257.4 -163.3 L-257.7 -155.8" stroke-width="3.41" stroke-opacity="0.262"/><path d="M-245.6 -71.6 L-261.1 -156.4" stroke-width="1.57" stroke-opacity="0.721"/><path d="M-260.7 -165.4 L-261.1 -156.4" stroke-width="3.46" stroke-opacity="0.254"/><path d="M-248.8 -72.6 L-264.6 -156.9" stroke-width="1.59" stroke-opacity="0.692"/><path d="M-264.1 -167.6 L-264.6 -156.9" stroke-width="3.50" stroke-opacity="0.246"/><path d="M-252.0 -73.5 L-268.1 -157.4" stroke-width="1.61" stroke-opacity="0.663"/><path d="M-267.6 -169.8 L-268.1 -157.4" stroke-width="3.55" stroke-opacity="0.238"/><path d="M-255.3 -74.5 L-271.7 -157.9" stroke-width="1.63" stroke-opacity="0.637"/><path d="M-271.0 -172.0 L-271.7 -157.9" stroke-width="3.59" stroke-opacity="0.230"/><path d="M-258.6 -75.4 L-275.3 -158.5" stroke-width="1.65" stroke-opacity="0.611"/><path d="M-274.6 -174.2 L-275.3 -158.5" stroke-width="3.64" stroke-opacity="0.222"/><path d="M-262.0 -76.4 L-278.9 -159.0" stroke-width="1.67" stroke-opacity="0.587"/><path d="M-278.1 -176.5 L-278.9 -159.0" stroke-width="3.69" stroke-opacity="0.214"/><path d="M-265.4 -77.4 L-282.6 -159.5" stroke-width="1.69" stroke-opacity="0.565"/><path d="M-281.8 -178.8 L-282.6 -159.5" stroke-width="3.74" stroke-opacity="0.206"/><path d="M-268.9 -78.4 L-286.3 -159.9" stroke-width="1.72" stroke-opacity="0.543"/><path d="M-285.4 -181.1 L-286.3 -159.9" stroke-width="3.79" stroke-opacity="0.197"/><path d="M-272.4 -79.4 L-290.1 -160.4" stroke-width="1.74" stroke-opacity="0.522"/><path d="M-289.1 -183.4 L-290.1 -160.4" stroke-width="3.83" stroke-opacity="0.189"/><path d="M-275.9 -80.5 L-294.0 -160.9" stroke-width="1.76" stroke-opacity="0.502"/><path d="M-292.9 -185.8 L-294.0 -160.9" stroke-width="3.88" stroke-opacity="0.181"/><path d="M-279.5 -81.5 L-297.9 -161.4" stroke-width="1.78" stroke-opacity="0.483"/><path d="M-296.7 -188.2 L-297.9 -161.4" stroke-width="3.93" stroke-opacity="0.172"/><path d="M-283.1 -82.6 L-301.8 -161.8" stroke-width="1.81" stroke-opacity="0.465"/><path d="M-300.6 -190.7 L-301.8 -161.8" stroke-width="3.99" stroke-opacity="0.164"/><path d="M-286.8 -83.7 L-305.8 -162.3" stroke-width="1.83" stroke-opacity="0.447"/><path d="M-304.5 -193.2 L-305.8 -162.3" stroke-width="4.04" stroke-opacity="0.155"/><path d="M-290.5 -84.7 L-309.9 -162.7" stroke-width="1.85" stroke-opacity="0.430"/><path d="M-308.4 -195.7 L-309.9 -162.7" stroke-width="4.09" stroke-opacity="0.147"/><path d="M-294.3 -85.8 L-314.0 -163.2" stroke-width="1.88" stroke-opacity="0.413"/><path d="M-312.4 -198.2 L-314.0 -163.2" stroke-width="4.14" stroke-opacity="0.138"/><path d="M-298.1 -87.0 L-318.1 -163.6" stroke-width="1.90" stroke-opacity="0.397"/><path d="M-316.5 -200.8 L-318.1 -163.6" stroke-width="4.20" stroke-opacity="0.130"/><path d="M-302.0 -88.1 L-322.3 -164.0" stroke-width="1.93" stroke-opacity="0.381"/><path d="M-320.6 -203.4 L-322.3 -164.0" stroke-width="4.25" stroke-opacity="0.121"/><path d="M-305.9 -89.2 L-326.6 -164.4" stroke-width="1.95" stroke-opacity="0.366"/><path d="M-324.8 -206.1 L-326.6 -164.4" stroke-width="4.31" stroke-opacity="0.113"/><path d="M-309.9 -90.4 L-330.9 -164.8" stroke-width="1.98" stroke-opacity="0.352"/><path d="M-329.0 -208.7 L-330.9 -164.8" stroke-width="4.36" stroke-opacity="0.104"/><path d="M-313.9 -91.6 L-335.3 -165.2" stroke-width="2.00" stroke-opacity="0.337"/><path d="M-333.3 -211.5 L-335.3 -165.2" stroke-width="4.42" stroke-opacity="0.096"/><path d="M-318.0 -92.8 L-339.7 -165.5" stroke-width="2.03" stroke-opacity="0.323"/><path d="M-337.6 -214.2 L-339.7 -165.5" stroke-width="4.48" stroke-opacity="0.087"/><path d="M-322.1 -94.0 L-344.2 -165.9" stroke-width="2.06" stroke-opacity="0.310"/><path d="M-342.0 -217.0 L-344.2 -165.9" stroke-width="4.54" stroke-opacity="0.078"/><path d="M-326.3 -95.2 L-348.8 -166.2" stroke-width="2.08" stroke-opacity="0.296"/><path d="M-346.4 -219.8 L-348.8 -166.2" stroke-width="4.59" stroke-opacity="0.070"/><path d="M-330.6 -96.4 L-353.4 -166.6" stroke-width="2.11" stroke-opacity="0.283"/><path d="M-350.9 -222.7 L-353.4 -166.6" stroke-width="4.65" stroke-opacity="0.062"/><path d="M-334.9 -97.7 L-358.1 -166.9" stroke-width="2.14" stroke-opacity="0.271"/><path d="M-355.5 -225.6 L-358.1 -166.9" stroke-width="4.71" stroke-opacity="0.053"/><path d="M-339.2 -98.9 L-362.8 -167.2" stroke-width="2.16" stroke-opacity="0.258"/><path d="M-360.1 -228.5 L-362.8 -167.2" stroke-width="4.78" stroke-opacity="0.045"/><path d="M-343.6 -100.2 L-367.6 -167.5" stroke-width="2.19" stroke-opacity="0.246"/><path d="M-364.8 -231.5 L-367.6 -167.5" stroke-width="4.84" stroke-opacity="0.037"/><path d="M-348.1 -101.5 L-372.4 -167.8" stroke-width="2.22" stroke-opacity="0.234"/><path d="M-369.5 -234.5 L-372.4 -167.8" stroke-width="4.90" stroke-opacity="0.029"/><path d="M-352.6 -102.9 L-377.4 -168.0" stroke-width="2.25" stroke-opacity="0.222"/><path d="M-374.4 -237.5 L-377.4 -168.0" stroke-width="4.96" stroke-opacity="0.021"/><path d="M-357.2 -104.2 L-382.3 -168.3" stroke-width="2.28" stroke-opacity="0.211"/><path d="M-379.2 -240.6 L-382.3 -168.3" stroke-width="5.03" stroke-opacity="0.014"/><path d="M-361.9 -105.5 L-387.4 -168.5" stroke-width="2.31" stroke-opacity="0.200"/><path d="M-384.1 -243.7 L-387.4 -168.5" stroke-width="5.09" stroke-opacity="0.007"/><path d="M-366.6 -106.9 L-392.5 -168.7" stroke-width="2.34" stroke-opacity="0.189"/><path d="M-389.1 -246.9 L-392.5 -168.7" stroke-width="5.16" stroke-opacity="0.001"/><path d="M-371.3 -108.3 L-397.7 -168.9" stroke-width="2.37" stroke-opacity="0.178"/><path d="M-376.2 -109.7 L-402.9 -169.1" stroke-width="2.40" stroke-opacity="0.168"/><path d="M-381.0 -111.1 L-408.2 -169.3" stroke-width="2.43" stroke-opacity="0.158"/><path d="M-386.0 -112.6 L-413.6 -169.4" stroke-width="2.46" stroke-opacity="0.148"/><path d="M-391.0 -114.1 L-419.1 -169.6" stroke-width="2.49" stroke-opacity="0.138"/><path d="M-396.1 -115.5 L-424.6 -169.7" stroke-width="2.53" stroke-opacity="0.128"/><path d="M-401.2 -117.0 L-430.2 -169.8" stroke-width="2.56" stroke-opacity="0.119"/><path d="M-406.5 -118.6 L-435.9 -169.8" stroke-width="2.59" stroke-opacity="0.110"/><path d="M-411.8 -120.1 L-441.6 -169.9" stroke-width="2.63" stroke-opacity="0.101"/><path d="M-417.1 -121.7 L-447.4 -169.9" stroke-width="2.66" stroke-opacity="0.093"/><path d="M-422.5 -123.2 L-453.3 -169.9" stroke-width="2.70" stroke-opacity="0.084"/><path d="M-428.0 -124.8 L-459.3 -169.9" stroke-width="2.73" stroke-opacity="0.076"/><path d="M-433.6 -126.5 L-465.3 -169.9" stroke-width="2.77" stroke-opacity="0.069"/><path d="M-439.2 -128.1 L-471.4 -169.8" stroke-width="2.80" stroke-opacity="0.061"/><path d="M-444.9 -129.8 L-477.6 -169.7" stroke-width="2.84" stroke-opacity="0.054"/><path d="M-450.7 -131.5 L-483.9 -169.6" stroke-width="2.88" stroke-opacity="0.047"/><path d="M-456.6 -133.2 L-490.2 -169.5" stroke-width="2.91" stroke-opacity="0.040"/><path d="M-462.5 -134.9 L-496.7 -169.3" stroke-width="2.95" stroke-opacity="0.034"/><path d="M-468.5 -136.7 L-503.2 -169.1" stroke-width="2.99" stroke-opacity="0.028"/><path d="M-474.6 -138.4 L-509.8 -168.9" stroke-width="3.03" stroke-opacity="0.022"/><path d="M-480.8 -140.2 L-516.4 -168.6" stroke-width="3.07" stroke-opacity="0.017"/><path d="M-487.0 -142.1 L-523.2 -168.3" stroke-width="3.11" stroke-opacity="0.013"/><path d="M-493.4 -143.9 L-530.1 -168.0" stroke-width="3.15" stroke-opacity="0.008"/><path d="M-499.8 -145.8 L-537.0 -167.7" stroke-width="3.19" stroke-opacity="0.005"/><path d="M-506.3 -147.7 L-544.0 -167.3" stroke-width="3.23" stroke-opacity="0.002"/></g><path id="spk" d="M0 0 L203.1 -2.8 M0 0 L279.2 76.9 M0 0 L197.1 121.6 M0 0 L121.4 136.0 M0 0 L102.3 218.4 M0 0 L39.6 256.1 M0 0 L-30.5 237.7 M0 0 L-118.9 266.1 M0 0 L-163.9 192.7 M0 0 L-138.9 90.9 M0 0 L-217.3 65.2 M0 0 L-259.0 1.0 M0 0 L-227.3 -66.3 M0 0 L-241.3 -153.1 M0 0 L-179.9 -206.5 M0 0 L-80.5 -174.1 M0 0 L-30.5 -209.1 M0 0 L35.3 -254.2 M0 0 L103.0 -227.5 M0 0 L177.1 -207.5 M0 0 L240.5 -155.7 M0 0 L208.1 -61.7" fill="none"/><g stroke="#e01200" stroke-width="2.4" style="mix-blend-mode:screen"><use href="#spk" transform="rotate(0.42)" stroke-opacity="0.381"/><use href="#spk" transform="rotate(0.84)" stroke-opacity="0.344"/><use href="#spk" transform="rotate(1.26)" stroke-opacity="0.307"/><use href="#spk" transform="rotate(1.68)" stroke-opacity="0.271"/><use href="#spk" transform="rotate(2.10)" stroke-opacity="0.236"/><use href="#spk" transform="rotate(2.52)" stroke-opacity="0.203"/><use href="#spk" transform="rotate(2.94)" stroke-opacity="0.171"/><use href="#spk" transform="rotate(3.36)" stroke-opacity="0.140"/><use href="#spk" transform="rotate(3.78)" stroke-opacity="0.110"/><use href="#spk" transform="rotate(4.20)" stroke-opacity="0.082"/><use href="#spk" transform="rotate(4.62)" stroke-opacity="0.057"/><use href="#spk" transform="rotate(5.04)" stroke-opacity="0.033"/><use href="#spk" transform="rotate(5.46)" stroke-opacity="0.014"/></g><g filter="url(#bl3)"><path d="M0 0 L203.1 -2.8 M0 0 L279.2 76.9 M0 0 L197.1 121.6 M0 0 L121.4 136.0 M0 0 L102.3 218.4 M0 0 L39.6 256.1 M0 0 L-30.5 237.7 M0 0 L-118.9 266.1 M0 0 L-163.9 192.7 M0 0 L-138.9 90.9 M0 0 L-217.3 65.2 M0 0 L-259.0 1.0 M0 0 L-227.3 -66.3 M0 0 L-241.3 -153.1 M0 0 L-179.9 -206.5 M0 0 L-80.5 -174.1 M0 0 L-30.5 -209.1 M0 0 L35.3 -254.2 M0 0 L103.0 -227.5 M0 0 L177.1 -207.5 M0 0 L240.5 -155.7 M0 0 L208.1 -61.7" fill="none" stroke="#d00000" stroke-width="8" stroke-opacity="0.6"/><path d="M-259.0 1.0 L-208.0 -60.0 M-227.3 -66.3 L-241.3 -153.1 M-179.9 -206.5 L-147.2 -95.7 M-80.5 -174.1 L-83.8 -97.3 M-61.1 -135.1 L-18.8 -122.4 M-30.5 -209.1 L16.9 -123.0 M35.3 -254.2 L78.0 -174.1 M103.0 -227.5 L177.1 -207.5 M126.4 -146.4 L240.5 -155.7 M114.7 -74.0 L208.1 -61.7 M129.7 -39.0 L135.4 -2.3 M203.1 -2.8 L279.2 76.9 M136.4 37.5 L197.1 121.6 M108.0 70.2 L98.0 107.6 M49.6 101.9 L121.4 136.0 M24.6 152.6 L102.3 218.4 M39.6 256.1 L-30.5 237.7 M-30.5 219.4 L-118.9 266.1 M-64.5 142.6 L-163.9 192.7 M-83.8 95.9 L-138.9 90.9 M-110.5 32.5 L-138.9 90.9 M-217.3 65.2 L-137.2 0.2" fill="none" stroke="#d00000" stroke-width="5" stroke-opacity="0.45"/></g><g filter="url(#bl1)"><path d="M0 0 L203.1 -2.8 M0 0 L279.2 76.9 M0 0 L197.1 121.6 M0 0 L121.4 136.0 M0 0 L102.3 218.4 M0 0 L39.6 256.1 M0 0 L-30.5 237.7 M0 0 L-118.9 266.1 M0 0 L-163.9 192.7 M0 0 L-138.9 90.9 M0 0 L-217.3 65.2 M0 0 L-259.0 1.0 M0 0 L-227.3 -66.3 M0 0 L-241.3 -153.1 M0 0 L-179.9 -206.5 M0 0 L-80.5 -174.1 M0 0 L-30.5 -209.1 M0 0 L35.3 -254.2 M0 0 L103.0 -227.5 M0 0 L177.1 -207.5 M0 0 L240.5 -155.7 M0 0 L208.1 -61.7" fill="none" stroke="#ff2000" stroke-width="4.0" stroke-opacity="0.9"/><path d="M-259.0 1.0 L-208.0 -60.0 M-227.3 -66.3 L-241.3 -153.1 M-179.9 -206.5 L-147.2 -95.7 M-80.5 -174.1 L-83.8 -97.3 M-61.1 -135.1 L-18.8 -122.4 M-30.5 -209.1 L16.9 -123.0 M35.3 -254.2 L78.0 -174.1 M103.0 -227.5 L177.1 -207.5 M126.4 -146.4 L240.5 -155.7 M114.7 -74.0 L208.1 -61.7 M129.7 -39.0 L135.4 -2.3 M203.1 -2.8 L279.2 76.9 M136.4 37.5 L197.1 121.6 M108.0 70.2 L98.0 107.6 M49.6 101.9 L121.4 136.0 M24.6 152.6 L102.3 218.4 M39.6 256.1 L-30.5 237.7 M-30.5 219.4 L-118.9 266.1 M-64.5 142.6 L-163.9 192.7 M-83.8 95.9 L-138.9 90.9 M-110.5 32.5 L-138.9 90.9 M-217.3 65.2 L-137.2 0.2" fill="none" stroke="#ff2000" stroke-width="2.6" stroke-opacity="0.75"/></g><path d="M-259.0 1.0 L-208.0 -60.0 M-227.3 -66.3 L-241.3 -153.1 M-179.9 -206.5 L-147.2 -95.7 M-80.5 -174.1 L-83.8 -97.3 M-61.1 -135.1 L-18.8 -122.4 M-30.5 -209.1 L16.9 -123.0 M35.3 -254.2 L78.0 -174.1 M103.0 -227.5 L177.1 -207.5 M126.4 -146.4 L240.5 -155.7 M114.7 -74.0 L208.1 -61.7 M129.7 -39.0 L135.4 -2.3 M203.1 -2.8 L279.2 76.9 M136.4 37.5 L197.1 121.6 M108.0 70.2 L98.0 107.6 M49.6 101.9 L121.4 136.0 M24.6 152.6 L102.3 218.4 M39.6 256.1 L-30.5 237.7 M-30.5 219.4 L-118.9 266.1 M-64.5 142.6 L-163.9 192.7 M-83.8 95.9 L-138.9 90.9 M-110.5 32.5 L-138.9 90.9 M-217.3 65.2 L-137.2 0.2" fill="none" stroke="#ff8c00" stroke-width="1.3" stroke-linecap="round"/><path d="M0 0 L203.1 -2.8 M0 0 L279.2 76.9 M0 0 L197.1 121.6 M0 0 L121.4 136.0 M0 0 L102.3 218.4 M0 0 L39.6 256.1 M0 0 L-30.5 237.7 M0 0 L-118.9 266.1 M0 0 L-163.9 192.7 M0 0 L-138.9 90.9 M0 0 L-217.3 65.2 M0 0 L-259.0 1.0 M0 0 L-227.3 -66.3 M0 0 L-241.3 -153.1 M0 0 L-179.9 -206.5 M0 0 L-80.5 -174.1 M0 0 L-30.5 -209.1 M0 0 L35.3 -254.2 M0 0 L103.0 -227.5 M0 0 L177.1 -207.5 M0 0 L240.5 -155.7 M0 0 L208.1 -61.7" fill="none" stroke="url(#sg2)" stroke-width="3.0" stroke-linecap="round"/><path d="M0 0 L203.1 -2.8 M0 0 L279.2 76.9 M0 0 L197.1 121.6 M0 0 L121.4 136.0 M0 0 L102.3 218.4 M0 0 L39.6 256.1 M0 0 L-30.5 237.7 M0 0 L-118.9 266.1 M0 0 L-163.9 192.7 M0 0 L-138.9 90.9 M0 0 L-217.3 65.2 M0 0 L-259.0 1.0 M0 0 L-227.3 -66.3 M0 0 L-241.3 -153.1 M0 0 L-179.9 -206.5 M0 0 L-80.5 -174.1 M0 0 L-30.5 -209.1 M0 0 L35.3 -254.2 M0 0 L103.0 -227.5 M0 0 L177.1 -207.5 M0 0 L240.5 -155.7 M0 0 L208.1 -61.7" fill="none" stroke="url(#sg)" stroke-width="2.0" stroke-linecap="round"/><circle cx="0" cy="0" r="14.5" fill="url(#cg)"/></g></svg>
<div class="b" style="left:236.5px;top:92px;width:976px;height:66px;border-radius:11px;background:rgba(38,36,36,0.77);"></div>
<svg class="b" style="left:0.0px;top:0.0px;" width="2098.0" height="1375.0" viewBox="0 0 2098.0 1375.0"><circle cx="269.2" cy="124.5" r="16.7" fill="none" stroke="#e4e4e4" stroke-width="1.6"/><path d="M263.86 119.82 a5.34 5.34 0 1 1 8.35 4.17 q-3.01 2.34 -3.01 7.01" fill="none" stroke="#e4e4e4" stroke-width="1.6" stroke-linecap="round"/><circle cx="269.2" cy="134.85" r="1.17" fill="none" stroke="#e4e4e4" stroke-width="1.28"/><path d="M323.3 115 V133" stroke="#bbb" stroke-width="1.1"/><path d="M504.8 115 V133" stroke="#fff" stroke-width="2"/><path d="M758.6 115 V133" stroke="#bbb" stroke-width="1.1"/><path d="M366.23 114.30 H378.20 A13.6 13.6 0 1 1 364.81 125.54" fill="none" stroke="#6c6c6c" stroke-width="1.7"/><path d="M372.22 108.32 L366.23 114.30 L372.22 120.28" fill="none" stroke="#6c6c6c" stroke-width="1.7"/><g transform="translate(900.8,0) scale(-1,1)"><path d="M438.43 114.30 H450.40 A13.6 13.6 0 1 1 437.01 125.54" fill="none" stroke="#6c6c6c" stroke-width="1.7"/><path d="M444.42 108.32 L438.43 114.30 L444.42 120.28" fill="none" stroke="#6c6c6c" stroke-width="1.7"/></g><rect x="551.3" y="119.3" width="17.4" height="10.4" rx="1" fill="none" stroke="#e4e4e4" stroke-width="1.7"/><path d="M555.5 114.5 L560 110.5 L564.5 114.5 M555.5 134.5 L560 138.5 L564.5 134.5 M546.8 120 L543.3 124.5 L546.8 129 M573.2 120 L576.7 124.5 L573.2 129" fill="none" stroke="#e4e4e4" stroke-width="1.6"/><path d="M615.5 120 V107.6 H628 M636.5 107.6 H648.8 V120 M648.8 128.5 V141 H636.5 M628 141 H615.5 V128.5" fill="none" stroke="#e4e4e4" stroke-width="1.8"/><rect x="689.3" y="115.8" width="24" height="24" rx="2" fill="none" stroke="#e4e4e4" stroke-width="1.7"/><path d="M696 109.3 H716.5 Q719.3 109.3 719.3 112 V132.5" fill="none" stroke="#e4e4e4" stroke-width="1.7"/><circle cx="1035.5" cy="124.5" r="17.2" fill="#8a0000"/><path d="M1092.5 115 H1098 L1100.5 110 H1114 L1116.5 115 H1121.5 Q1124.2 115 1124.2 117.8 V136 Q1124.2 138.8 1121.5 138.8 H1092.5 Q1089.8 138.8 1089.8 136 V117.8 Q1089.8 115 1092.5 115 Z" fill="none" stroke="#e4e4e4" stroke-width="1.9" stroke-linejoin="round"/><circle cx="1107.3" cy="126.8" r="7.4" fill="none" stroke="#e4e4e4" stroke-width="1.9"/><path d="M1162.5 135 V113.5 Q1162.5 111.3 1164.7 111.3 H1175 L1179.5 115.8 H1193.8 Q1196 115.8 1196 118 V135 Q1196 137.2 1193.8 137.2 H1164.7 Q1162.5 137.2 1162.5 135 Z" fill="none" stroke="#e4e4e4" stroke-width="1.7" stroke-linejoin="round"/></svg>
<span class="t" style="left:795.5px;top:115.0px;font-size:19.19px;line-height:21px;color:#fff;transform:scaleX(0.6871);text-shadow:0.38px 0 0 #fff,-0.38px 0 0 #fff;">57 FPS</span>
</div></body></html>
